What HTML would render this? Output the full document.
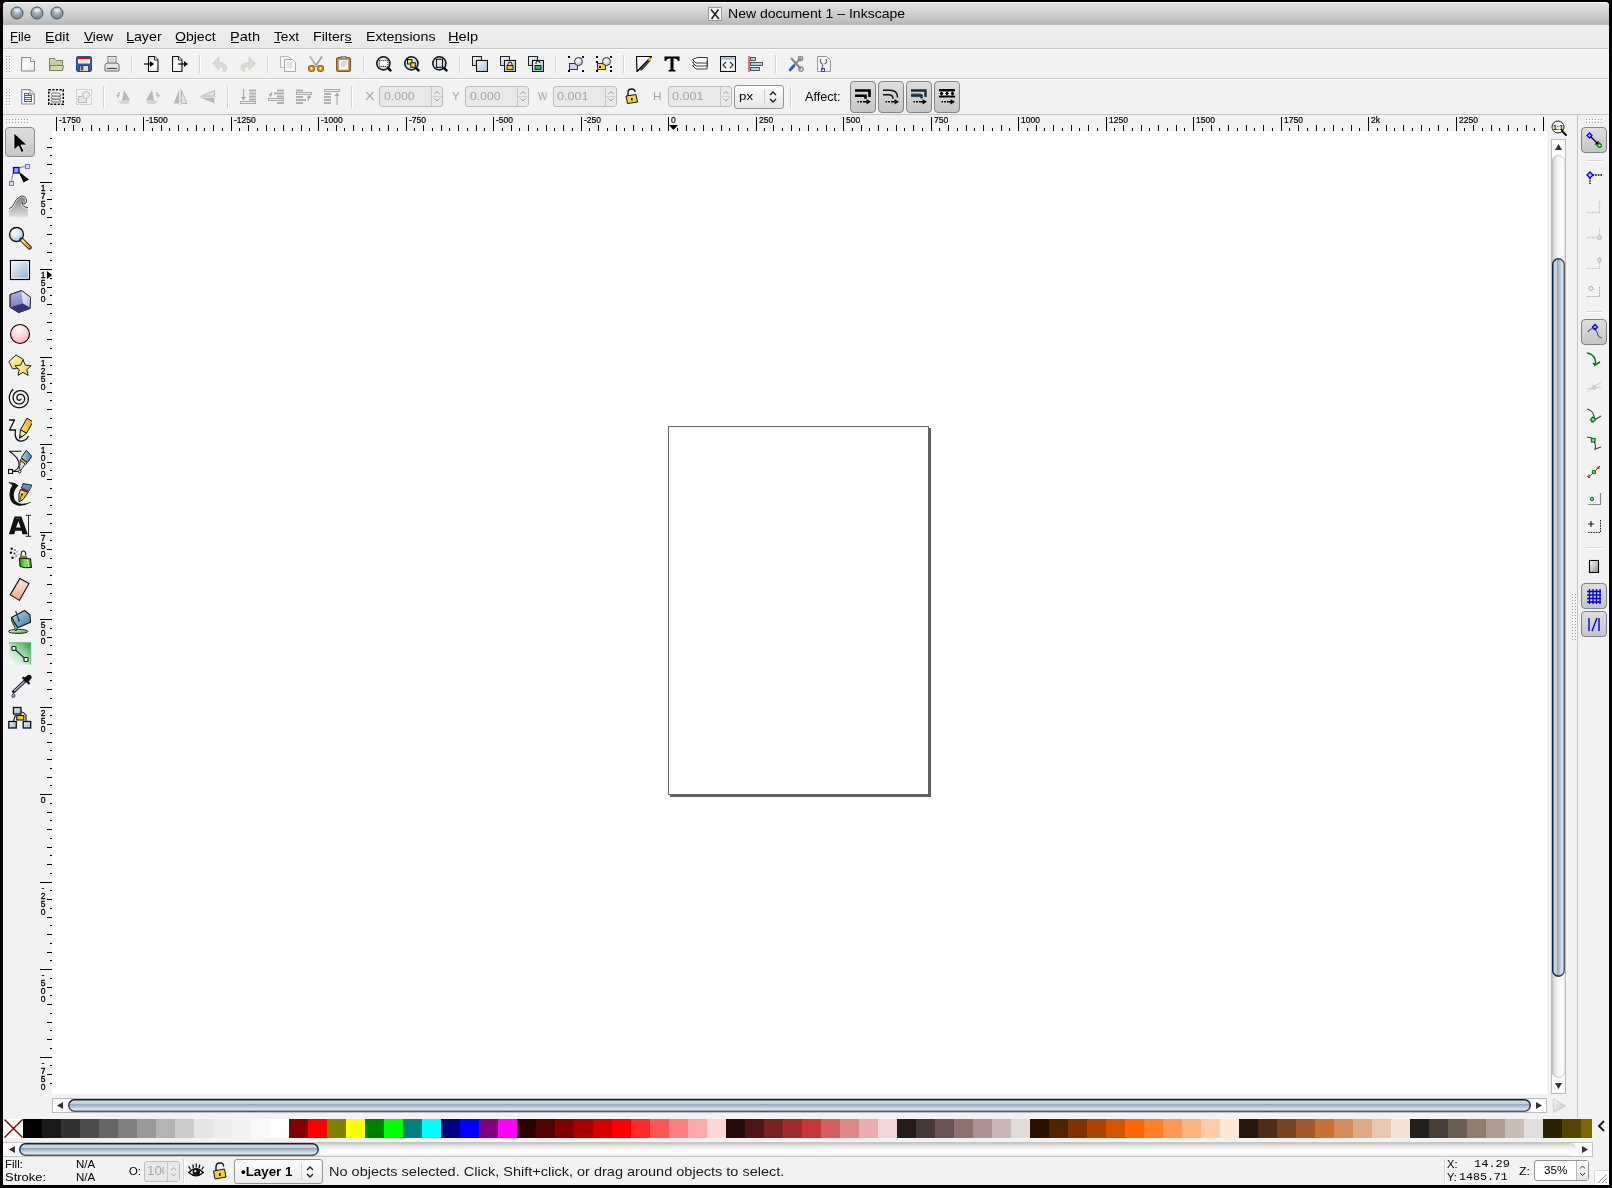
<!DOCTYPE html><html><head><meta charset="utf-8"><style>
*{margin:0;padding:0;box-sizing:border-box}
html,body{width:1612px;height:1188px;overflow:hidden;background:#000}
body{position:relative;font-family:"Liberation Sans",sans-serif;color:#000}
div,svg{position:absolute}
.t{white-space:nowrap;line-height:1;will-change:transform}
</style></head><body><div style="left:3px;top:2px;width:1606px;height:1183px;background:#f2f2f2;border-radius:4px 4px 0 0;"></div>
<div style="left:3px;top:2px;width:1606px;height:23px;background:linear-gradient(#e2e2e2,#cbcbcb 60%,#b6b6b6);border-top:1px solid #fff;border-radius:4px 4px 0 0;"></div>
<svg style="left:10px;top:6px" width="14" height="14"><defs><radialGradient id="tb17" cx="50%" cy="30%" r="70%"><stop offset="0" stop-color="#d4dde3"/><stop offset="0.5" stop-color="#98a8b3"/><stop offset="1" stop-color="#6e7d88"/></radialGradient></defs><circle cx="7" cy="7" r="6" fill="url(#tb17)" stroke="#4a555e" stroke-width="1"/><ellipse cx="7" cy="4.2" rx="3" ry="1.6" fill="#fff" opacity="0.5"/></svg>
<svg style="left:30px;top:6px" width="14" height="14"><defs><radialGradient id="tb37" cx="50%" cy="30%" r="70%"><stop offset="0" stop-color="#d4dde3"/><stop offset="0.5" stop-color="#98a8b3"/><stop offset="1" stop-color="#6e7d88"/></radialGradient></defs><circle cx="7" cy="7" r="6" fill="url(#tb37)" stroke="#4a555e" stroke-width="1"/><ellipse cx="7" cy="4.2" rx="3" ry="1.6" fill="#fff" opacity="0.5"/></svg>
<svg style="left:50px;top:6px" width="14" height="14"><defs><radialGradient id="tb57" cx="50%" cy="30%" r="70%"><stop offset="0" stop-color="#d4dde3"/><stop offset="0.5" stop-color="#98a8b3"/><stop offset="1" stop-color="#6e7d88"/></radialGradient></defs><circle cx="7" cy="7" r="6" fill="url(#tb57)" stroke="#4a555e" stroke-width="1"/><ellipse cx="7" cy="4.2" rx="3" ry="1.6" fill="#fff" opacity="0.5"/></svg>
<svg style="left:708px;top:7px" width="14" height="14"><rect x="0.5" y="0.5" width="13" height="13" fill="#f4f4f4" stroke="#9a9a9a"/><path d="M3 2.5L11 12M10.5 2.5L3.5 12" stroke="#222" stroke-width="1.6"/></svg>
<div style="left:3px;top:25px;width:1606px;height:23px;background:linear-gradient(#efefef,#e8e8e8);"></div>
<div style="left:3px;top:48px;width:1606px;height:1px;background:#c4c4c4;"></div>
<div style="left:3px;top:49px;width:1606px;height:1px;background:#fff;"></div>
<div style="left:3px;top:78px;width:1606px;height:1px;background:#c8c8c8;"></div>
<div style="left:3px;top:79px;width:1606px;height:1px;background:#fff;"></div>
<div style="left:3px;top:114px;width:1606px;height:1px;background:#c4c4c4;"></div>
<div style="left:52px;top:131px;width:1495px;height:963px;background:#fff;"></div>
<div style="left:668px;top:426px;width:261px;height:369px;border:1px solid #666;"></div>
<div style="left:929px;top:428px;width:2px;height:369px;background:#606060;"></div>
<div style="left:670px;top:795px;width:261px;height:2px;background:#606060;"></div>
<div style="left:1577px;top:115px;width:1px;height:1003px;background:#c4c4c4;"></div>
<svg style="left:6px;top:56px" width="6" height="18" shape-rendering="crispEdges"><rect x="0" y="0" width="1" height="1" fill="#9a9a9a"/><rect x="1" y="1" width="1" height="1" fill="#fff"/><rect x="3" y="0" width="1" height="1" fill="#9a9a9a"/><rect x="4" y="1" width="1" height="1" fill="#fff"/><rect x="0" y="3" width="1" height="1" fill="#9a9a9a"/><rect x="1" y="4" width="1" height="1" fill="#fff"/><rect x="3" y="3" width="1" height="1" fill="#9a9a9a"/><rect x="4" y="4" width="1" height="1" fill="#fff"/><rect x="0" y="6" width="1" height="1" fill="#9a9a9a"/><rect x="1" y="7" width="1" height="1" fill="#fff"/><rect x="3" y="6" width="1" height="1" fill="#9a9a9a"/><rect x="4" y="7" width="1" height="1" fill="#fff"/><rect x="0" y="9" width="1" height="1" fill="#9a9a9a"/><rect x="1" y="10" width="1" height="1" fill="#fff"/><rect x="3" y="9" width="1" height="1" fill="#9a9a9a"/><rect x="4" y="10" width="1" height="1" fill="#fff"/><rect x="0" y="12" width="1" height="1" fill="#9a9a9a"/><rect x="1" y="13" width="1" height="1" fill="#fff"/><rect x="3" y="12" width="1" height="1" fill="#9a9a9a"/><rect x="4" y="13" width="1" height="1" fill="#fff"/><rect x="0" y="15" width="1" height="1" fill="#9a9a9a"/><rect x="1" y="16" width="1" height="1" fill="#fff"/><rect x="3" y="15" width="1" height="1" fill="#9a9a9a"/><rect x="4" y="16" width="1" height="1" fill="#fff"/></svg>
<div style="left:131px;top:55px;width:1px;height:18px;background:#d4d4d4;"></div>
<div style="left:132px;top:55px;width:1px;height:18px;background:#fff;"></div>
<div style="left:199px;top:55px;width:1px;height:18px;background:#d4d4d4;"></div>
<div style="left:200px;top:55px;width:1px;height:18px;background:#fff;"></div>
<div style="left:267px;top:55px;width:1px;height:18px;background:#d4d4d4;"></div>
<div style="left:268px;top:55px;width:1px;height:18px;background:#fff;"></div>
<div style="left:363px;top:55px;width:1px;height:18px;background:#d4d4d4;"></div>
<div style="left:364px;top:55px;width:1px;height:18px;background:#fff;"></div>
<div style="left:459px;top:55px;width:1px;height:18px;background:#d4d4d4;"></div>
<div style="left:460px;top:55px;width:1px;height:18px;background:#fff;"></div>
<div style="left:555px;top:55px;width:1px;height:18px;background:#d4d4d4;"></div>
<div style="left:556px;top:55px;width:1px;height:18px;background:#fff;"></div>
<div style="left:623px;top:55px;width:1px;height:18px;background:#d4d4d4;"></div>
<div style="left:624px;top:55px;width:1px;height:18px;background:#fff;"></div>
<div style="left:775px;top:55px;width:1px;height:18px;background:#d4d4d4;"></div>
<div style="left:776px;top:55px;width:1px;height:18px;background:#fff;"></div>
<svg style="left:6px;top:89px" width="6" height="18" shape-rendering="crispEdges"><rect x="0" y="0" width="1" height="1" fill="#9a9a9a"/><rect x="1" y="1" width="1" height="1" fill="#fff"/><rect x="3" y="0" width="1" height="1" fill="#9a9a9a"/><rect x="4" y="1" width="1" height="1" fill="#fff"/><rect x="0" y="3" width="1" height="1" fill="#9a9a9a"/><rect x="1" y="4" width="1" height="1" fill="#fff"/><rect x="3" y="3" width="1" height="1" fill="#9a9a9a"/><rect x="4" y="4" width="1" height="1" fill="#fff"/><rect x="0" y="6" width="1" height="1" fill="#9a9a9a"/><rect x="1" y="7" width="1" height="1" fill="#fff"/><rect x="3" y="6" width="1" height="1" fill="#9a9a9a"/><rect x="4" y="7" width="1" height="1" fill="#fff"/><rect x="0" y="9" width="1" height="1" fill="#9a9a9a"/><rect x="1" y="10" width="1" height="1" fill="#fff"/><rect x="3" y="9" width="1" height="1" fill="#9a9a9a"/><rect x="4" y="10" width="1" height="1" fill="#fff"/><rect x="0" y="12" width="1" height="1" fill="#9a9a9a"/><rect x="1" y="13" width="1" height="1" fill="#fff"/><rect x="3" y="12" width="1" height="1" fill="#9a9a9a"/><rect x="4" y="13" width="1" height="1" fill="#fff"/><rect x="0" y="15" width="1" height="1" fill="#9a9a9a"/><rect x="1" y="16" width="1" height="1" fill="#fff"/><rect x="3" y="15" width="1" height="1" fill="#9a9a9a"/><rect x="4" y="16" width="1" height="1" fill="#fff"/></svg>
<div style="left:103px;top:86px;width:1px;height:22px;background:#d4d4d4;"></div>
<div style="left:104px;top:86px;width:1px;height:22px;background:#fff;"></div>
<div style="left:227px;top:86px;width:1px;height:22px;background:#d4d4d4;"></div>
<div style="left:228px;top:86px;width:1px;height:22px;background:#fff;"></div>
<div style="left:351px;top:86px;width:1px;height:22px;background:#d4d4d4;"></div>
<div style="left:352px;top:86px;width:1px;height:22px;background:#fff;"></div>
<div style="left:790px;top:86px;width:1px;height:22px;background:#d4d4d4;"></div>
<div style="left:791px;top:86px;width:1px;height:22px;background:#fff;"></div>
<div style="left:379px;top:86px;width:64px;height:21px;background:#e9e9e9;border:1px solid #bcbcbc;border-radius:3px;"></div>
<div style="left:431px;top:87px;width:1px;height:19px;background:#c6c6c6;"></div>
<div style="left:432px;top:96px;width:10px;height:1px;background:#d4d4d4;"></div>
<svg style="left:432px;top:87px" width="10" height="19"><path d="M2.5 7.0l2.5-2.5 2.5 2.5" fill="none" stroke="#a0a0a0" stroke-width="1"/><path d="M2.5 11.5l2.5 2.5 2.5-2.5" fill="none" stroke="#a0a0a0" stroke-width="1"/></svg>
<div style="left:465px;top:86px;width:64px;height:21px;background:#e9e9e9;border:1px solid #bcbcbc;border-radius:3px;"></div>
<div style="left:517px;top:87px;width:1px;height:19px;background:#c6c6c6;"></div>
<div style="left:518px;top:96px;width:10px;height:1px;background:#d4d4d4;"></div>
<svg style="left:518px;top:87px" width="10" height="19"><path d="M2.5 7.0l2.5-2.5 2.5 2.5" fill="none" stroke="#a0a0a0" stroke-width="1"/><path d="M2.5 11.5l2.5 2.5 2.5-2.5" fill="none" stroke="#a0a0a0" stroke-width="1"/></svg>
<div style="left:553px;top:86px;width:64px;height:21px;background:#e9e9e9;border:1px solid #bcbcbc;border-radius:3px;"></div>
<div style="left:605px;top:87px;width:1px;height:19px;background:#c6c6c6;"></div>
<div style="left:606px;top:96px;width:10px;height:1px;background:#d4d4d4;"></div>
<svg style="left:606px;top:87px" width="10" height="19"><path d="M2.5 7.0l2.5-2.5 2.5 2.5" fill="none" stroke="#a0a0a0" stroke-width="1"/><path d="M2.5 11.5l2.5 2.5 2.5-2.5" fill="none" stroke="#a0a0a0" stroke-width="1"/></svg>
<div style="left:668px;top:86px;width:64px;height:21px;background:#e9e9e9;border:1px solid #bcbcbc;border-radius:3px;"></div>
<div style="left:720px;top:87px;width:1px;height:19px;background:#c6c6c6;"></div>
<div style="left:721px;top:96px;width:10px;height:1px;background:#d4d4d4;"></div>
<svg style="left:721px;top:87px" width="10" height="19"><path d="M2.5 7.0l2.5-2.5 2.5 2.5" fill="none" stroke="#a0a0a0" stroke-width="1"/><path d="M2.5 11.5l2.5 2.5 2.5-2.5" fill="none" stroke="#a0a0a0" stroke-width="1"/></svg>
<div style="left:734px;top:85px;width:50px;height:24px;background:linear-gradient(#fdfdfd,#e6e6e6);border:1px solid #8f959a;border-radius:3px;"></div>
<div style="left:764px;top:89px;width:1px;height:16px;background:#cfcfcf;"></div>
<svg style="left:767px;top:88px" width="12" height="18"><path d="M3 7l3-3 3 3M3 11l3 3 3-3" fill="none" stroke="#222" stroke-width="1.4"/></svg>
<div style="left:850px;top:81px;width:26px;height:32px;background:linear-gradient(#dedede,#c6c6c6);border:1px solid #7e868c;border-radius:4px;"></div>
<div style="left:878px;top:81px;width:26px;height:32px;background:linear-gradient(#dedede,#c6c6c6);border:1px solid #7e868c;border-radius:4px;"></div>
<div style="left:906px;top:81px;width:26px;height:32px;background:linear-gradient(#dedede,#c6c6c6);border:1px solid #7e868c;border-radius:4px;"></div>
<div style="left:934px;top:81px;width:26px;height:32px;background:linear-gradient(#dedede,#c6c6c6);border:1px solid #7e868c;border-radius:4px;"></div>
<svg style="left:52px;top:115px;will-change:transform" width="1495" height="16" shape-rendering="crispEdges"><rect x="4" y="2" width="1" height="14"/><rect x="12" y="13" width="1" height="3"/><rect x="21" y="10" width="1" height="6"/><rect x="30" y="13" width="1" height="3"/><rect x="39" y="10" width="1" height="6"/><rect x="47" y="13" width="1" height="3"/><rect x="56" y="10" width="1" height="6"/><rect x="65" y="13" width="1" height="3"/><rect x="74" y="10" width="1" height="6"/><rect x="82" y="13" width="1" height="3"/><rect x="91" y="2" width="1" height="14"/><rect x="100" y="13" width="1" height="3"/><rect x="109" y="10" width="1" height="6"/><rect x="117" y="13" width="1" height="3"/><rect x="126" y="10" width="1" height="6"/><rect x="135" y="13" width="1" height="3"/><rect x="144" y="10" width="1" height="6"/><rect x="152" y="13" width="1" height="3"/><rect x="161" y="10" width="1" height="6"/><rect x="170" y="13" width="1" height="3"/><rect x="179" y="2" width="1" height="14"/><rect x="187" y="13" width="1" height="3"/><rect x="196" y="10" width="1" height="6"/><rect x="205" y="13" width="1" height="3"/><rect x="214" y="10" width="1" height="6"/><rect x="222" y="13" width="1" height="3"/><rect x="231" y="10" width="1" height="6"/><rect x="240" y="13" width="1" height="3"/><rect x="249" y="10" width="1" height="6"/><rect x="257" y="13" width="1" height="3"/><rect x="266" y="2" width="1" height="14"/><rect x="275" y="13" width="1" height="3"/><rect x="284" y="10" width="1" height="6"/><rect x="292" y="13" width="1" height="3"/><rect x="301" y="10" width="1" height="6"/><rect x="310" y="13" width="1" height="3"/><rect x="319" y="10" width="1" height="6"/><rect x="327" y="13" width="1" height="3"/><rect x="336" y="10" width="1" height="6"/><rect x="345" y="13" width="1" height="3"/><rect x="354" y="2" width="1" height="14"/><rect x="362" y="13" width="1" height="3"/><rect x="371" y="10" width="1" height="6"/><rect x="380" y="13" width="1" height="3"/><rect x="389" y="10" width="1" height="6"/><rect x="397" y="13" width="1" height="3"/><rect x="406" y="10" width="1" height="6"/><rect x="415" y="13" width="1" height="3"/><rect x="424" y="10" width="1" height="6"/><rect x="432" y="13" width="1" height="3"/><rect x="441" y="2" width="1" height="14"/><rect x="450" y="13" width="1" height="3"/><rect x="459" y="10" width="1" height="6"/><rect x="467" y="13" width="1" height="3"/><rect x="476" y="10" width="1" height="6"/><rect x="485" y="13" width="1" height="3"/><rect x="494" y="10" width="1" height="6"/><rect x="502" y="13" width="1" height="3"/><rect x="511" y="10" width="1" height="6"/><rect x="520" y="13" width="1" height="3"/><rect x="529" y="2" width="1" height="14"/><rect x="537" y="13" width="1" height="3"/><rect x="546" y="10" width="1" height="6"/><rect x="555" y="13" width="1" height="3"/><rect x="564" y="10" width="1" height="6"/><rect x="572" y="13" width="1" height="3"/><rect x="581" y="10" width="1" height="6"/><rect x="590" y="13" width="1" height="3"/><rect x="599" y="10" width="1" height="6"/><rect x="607" y="13" width="1" height="3"/><rect x="616" y="2" width="1" height="14"/><rect x="625" y="13" width="1" height="3"/><rect x="634" y="10" width="1" height="6"/><rect x="642" y="13" width="1" height="3"/><rect x="651" y="10" width="1" height="6"/><rect x="660" y="13" width="1" height="3"/><rect x="669" y="10" width="1" height="6"/><rect x="677" y="13" width="1" height="3"/><rect x="686" y="10" width="1" height="6"/><rect x="695" y="13" width="1" height="3"/><rect x="704" y="2" width="1" height="14"/><rect x="712" y="13" width="1" height="3"/><rect x="721" y="10" width="1" height="6"/><rect x="730" y="13" width="1" height="3"/><rect x="739" y="10" width="1" height="6"/><rect x="747" y="13" width="1" height="3"/><rect x="756" y="10" width="1" height="6"/><rect x="765" y="13" width="1" height="3"/><rect x="774" y="10" width="1" height="6"/><rect x="782" y="13" width="1" height="3"/><rect x="791" y="2" width="1" height="14"/><rect x="800" y="13" width="1" height="3"/><rect x="809" y="10" width="1" height="6"/><rect x="817" y="13" width="1" height="3"/><rect x="826" y="10" width="1" height="6"/><rect x="835" y="13" width="1" height="3"/><rect x="844" y="10" width="1" height="6"/><rect x="852" y="13" width="1" height="3"/><rect x="861" y="10" width="1" height="6"/><rect x="870" y="13" width="1" height="3"/><rect x="879" y="2" width="1" height="14"/><rect x="887" y="13" width="1" height="3"/><rect x="896" y="10" width="1" height="6"/><rect x="905" y="13" width="1" height="3"/><rect x="914" y="10" width="1" height="6"/><rect x="922" y="13" width="1" height="3"/><rect x="931" y="10" width="1" height="6"/><rect x="940" y="13" width="1" height="3"/><rect x="949" y="10" width="1" height="6"/><rect x="957" y="13" width="1" height="3"/><rect x="966" y="2" width="1" height="14"/><rect x="975" y="13" width="1" height="3"/><rect x="984" y="10" width="1" height="6"/><rect x="992" y="13" width="1" height="3"/><rect x="1001" y="10" width="1" height="6"/><rect x="1010" y="13" width="1" height="3"/><rect x="1019" y="10" width="1" height="6"/><rect x="1027" y="13" width="1" height="3"/><rect x="1036" y="10" width="1" height="6"/><rect x="1045" y="13" width="1" height="3"/><rect x="1054" y="2" width="1" height="14"/><rect x="1062" y="13" width="1" height="3"/><rect x="1071" y="10" width="1" height="6"/><rect x="1080" y="13" width="1" height="3"/><rect x="1089" y="10" width="1" height="6"/><rect x="1097" y="13" width="1" height="3"/><rect x="1106" y="10" width="1" height="6"/><rect x="1115" y="13" width="1" height="3"/><rect x="1124" y="10" width="1" height="6"/><rect x="1132" y="13" width="1" height="3"/><rect x="1141" y="2" width="1" height="14"/><rect x="1150" y="13" width="1" height="3"/><rect x="1159" y="10" width="1" height="6"/><rect x="1167" y="13" width="1" height="3"/><rect x="1176" y="10" width="1" height="6"/><rect x="1185" y="13" width="1" height="3"/><rect x="1194" y="10" width="1" height="6"/><rect x="1202" y="13" width="1" height="3"/><rect x="1211" y="10" width="1" height="6"/><rect x="1220" y="13" width="1" height="3"/><rect x="1229" y="2" width="1" height="14"/><rect x="1237" y="13" width="1" height="3"/><rect x="1246" y="10" width="1" height="6"/><rect x="1255" y="13" width="1" height="3"/><rect x="1264" y="10" width="1" height="6"/><rect x="1272" y="13" width="1" height="3"/><rect x="1281" y="10" width="1" height="6"/><rect x="1290" y="13" width="1" height="3"/><rect x="1299" y="10" width="1" height="6"/><rect x="1307" y="13" width="1" height="3"/><rect x="1316" y="2" width="1" height="14"/><rect x="1325" y="13" width="1" height="3"/><rect x="1334" y="10" width="1" height="6"/><rect x="1342" y="13" width="1" height="3"/><rect x="1351" y="10" width="1" height="6"/><rect x="1360" y="13" width="1" height="3"/><rect x="1369" y="10" width="1" height="6"/><rect x="1377" y="13" width="1" height="3"/><rect x="1386" y="10" width="1" height="6"/><rect x="1395" y="13" width="1" height="3"/><rect x="1404" y="2" width="1" height="14"/><rect x="1412" y="13" width="1" height="3"/><rect x="1421" y="10" width="1" height="6"/><rect x="1430" y="13" width="1" height="3"/><rect x="1439" y="10" width="1" height="6"/><rect x="1447" y="13" width="1" height="3"/><rect x="1456" y="10" width="1" height="6"/><rect x="1465" y="13" width="1" height="3"/><rect x="1474" y="10" width="1" height="6"/><rect x="1482" y="13" width="1" height="3"/><rect x="1491" y="2" width="1" height="14"/><g font-family="Liberation Sans" font-size="8.5" stroke="#000" stroke-width="0.2" shape-rendering="auto"><text x="7" y="8">-1750</text><text x="94" y="8">-1500</text><text x="182" y="8">-1250</text><text x="269" y="8">-1000</text><text x="357" y="8">-750</text><text x="444" y="8">-500</text><text x="532" y="8">-250</text><text x="619" y="8">0</text><text x="707" y="8">250</text><text x="794" y="8">500</text><text x="882" y="8">750</text><text x="969" y="8">1000</text><text x="1057" y="8">1250</text><text x="1144" y="8">1500</text><text x="1232" y="8">1750</text><text x="1319" y="8">2k</text><text x="1407" y="8">2250</text></g><path d="M617 10h9l-4.5 5z" shape-rendering="auto"/></svg>
<svg style="left:38px;top:131px;will-change:transform" width="14" height="963" shape-rendering="crispEdges"><rect x="12" y="952" width="2" height="1"/><rect x="9" y="943" width="5" height="1"/><rect x="12" y="934" width="2" height="1"/><rect x="2" y="926" width="12" height="1"/><rect x="12" y="917" width="2" height="1"/><rect x="9" y="908" width="5" height="1"/><rect x="12" y="899" width="2" height="1"/><rect x="9" y="891" width="5" height="1"/><rect x="12" y="882" width="2" height="1"/><rect x="9" y="873" width="5" height="1"/><rect x="12" y="864" width="2" height="1"/><rect x="9" y="856" width="5" height="1"/><rect x="12" y="847" width="2" height="1"/><rect x="2" y="838" width="12" height="1"/><rect x="12" y="829" width="2" height="1"/><rect x="9" y="821" width="5" height="1"/><rect x="12" y="812" width="2" height="1"/><rect x="9" y="803" width="5" height="1"/><rect x="12" y="794" width="2" height="1"/><rect x="9" y="786" width="5" height="1"/><rect x="12" y="777" width="2" height="1"/><rect x="9" y="768" width="5" height="1"/><rect x="12" y="759" width="2" height="1"/><rect x="2" y="751" width="12" height="1"/><rect x="12" y="742" width="2" height="1"/><rect x="9" y="733" width="5" height="1"/><rect x="12" y="724" width="2" height="1"/><rect x="9" y="716" width="5" height="1"/><rect x="12" y="707" width="2" height="1"/><rect x="9" y="698" width="5" height="1"/><rect x="12" y="689" width="2" height="1"/><rect x="9" y="681" width="5" height="1"/><rect x="12" y="672" width="2" height="1"/><rect x="2" y="663" width="12" height="1"/><rect x="12" y="654" width="2" height="1"/><rect x="9" y="646" width="5" height="1"/><rect x="12" y="637" width="2" height="1"/><rect x="9" y="628" width="5" height="1"/><rect x="12" y="619" width="2" height="1"/><rect x="9" y="611" width="5" height="1"/><rect x="12" y="602" width="2" height="1"/><rect x="9" y="593" width="5" height="1"/><rect x="12" y="584" width="2" height="1"/><rect x="2" y="576" width="12" height="1"/><rect x="12" y="567" width="2" height="1"/><rect x="9" y="558" width="5" height="1"/><rect x="12" y="549" width="2" height="1"/><rect x="9" y="541" width="5" height="1"/><rect x="12" y="532" width="2" height="1"/><rect x="9" y="523" width="5" height="1"/><rect x="12" y="514" width="2" height="1"/><rect x="9" y="506" width="5" height="1"/><rect x="12" y="497" width="2" height="1"/><rect x="2" y="488" width="12" height="1"/><rect x="12" y="479" width="2" height="1"/><rect x="9" y="471" width="5" height="1"/><rect x="12" y="462" width="2" height="1"/><rect x="9" y="453" width="5" height="1"/><rect x="12" y="444" width="2" height="1"/><rect x="9" y="436" width="5" height="1"/><rect x="12" y="427" width="2" height="1"/><rect x="9" y="418" width="5" height="1"/><rect x="12" y="409" width="2" height="1"/><rect x="2" y="401" width="12" height="1"/><rect x="12" y="392" width="2" height="1"/><rect x="9" y="383" width="5" height="1"/><rect x="12" y="374" width="2" height="1"/><rect x="9" y="366" width="5" height="1"/><rect x="12" y="357" width="2" height="1"/><rect x="9" y="348" width="5" height="1"/><rect x="12" y="339" width="2" height="1"/><rect x="9" y="331" width="5" height="1"/><rect x="12" y="322" width="2" height="1"/><rect x="2" y="313" width="12" height="1"/><rect x="12" y="304" width="2" height="1"/><rect x="9" y="296" width="5" height="1"/><rect x="12" y="287" width="2" height="1"/><rect x="9" y="278" width="5" height="1"/><rect x="12" y="269" width="2" height="1"/><rect x="9" y="261" width="5" height="1"/><rect x="12" y="252" width="2" height="1"/><rect x="9" y="243" width="5" height="1"/><rect x="12" y="234" width="2" height="1"/><rect x="2" y="226" width="12" height="1"/><rect x="12" y="217" width="2" height="1"/><rect x="9" y="208" width="5" height="1"/><rect x="12" y="199" width="2" height="1"/><rect x="9" y="191" width="5" height="1"/><rect x="12" y="182" width="2" height="1"/><rect x="9" y="173" width="5" height="1"/><rect x="12" y="164" width="2" height="1"/><rect x="9" y="156" width="5" height="1"/><rect x="12" y="147" width="2" height="1"/><rect x="2" y="138" width="12" height="1"/><rect x="12" y="129" width="2" height="1"/><rect x="9" y="121" width="5" height="1"/><rect x="12" y="112" width="2" height="1"/><rect x="9" y="103" width="5" height="1"/><rect x="12" y="94" width="2" height="1"/><rect x="9" y="86" width="5" height="1"/><rect x="12" y="77" width="2" height="1"/><rect x="9" y="68" width="5" height="1"/><rect x="12" y="59" width="2" height="1"/><rect x="2" y="51" width="12" height="1"/><rect x="12" y="42" width="2" height="1"/><rect x="9" y="33" width="5" height="1"/><rect x="12" y="24" width="2" height="1"/><rect x="9" y="16" width="5" height="1"/><rect x="12" y="7" width="2" height="1"/><g font-family="Liberation Sans" font-size="8.5" stroke="#000" stroke-width="0.3" text-anchor="middle" shape-rendering="auto"><text x="5" y="1022">-</text><text x="5" y="1030">1</text><text x="5" y="1038">0</text><text x="5" y="1046">0</text><text x="5" y="1054">0</text><text x="5" y="935">-</text><text x="5" y="943">7</text><text x="5" y="951">5</text><text x="5" y="959">0</text><text x="5" y="847">-</text><text x="5" y="855">5</text><text x="5" y="863">0</text><text x="5" y="871">0</text><text x="5" y="760">-</text><text x="5" y="768">2</text><text x="5" y="776">5</text><text x="5" y="784">0</text><text x="5" y="672">0</text><text x="5" y="585">2</text><text x="5" y="593">5</text><text x="5" y="601">0</text><text x="5" y="497">5</text><text x="5" y="505">0</text><text x="5" y="513">0</text><text x="5" y="410">7</text><text x="5" y="418">5</text><text x="5" y="426">0</text><text x="5" y="322">1</text><text x="5" y="330">0</text><text x="5" y="338">0</text><text x="5" y="346">0</text><text x="5" y="235">1</text><text x="5" y="243">2</text><text x="5" y="251">5</text><text x="5" y="259">0</text><text x="5" y="147">1</text><text x="5" y="155">5</text><text x="5" y="163">0</text><text x="5" y="171">0</text><text x="5" y="60">1</text><text x="5" y="68">7</text><text x="5" y="76">5</text><text x="5" y="84">0</text></g><path d="M9 140v8l5-4z" shape-rendering="auto"/></svg>
<div style="left:1551px;top:139px;width:15px;height:955px;background:#fdfdfd;border:1px solid #bcbcbc;"></div>
<div style="left:1552px;top:155px;width:13px;height:923px;background:linear-gradient(90deg,#c4c4c4,#e6e6e6 22%,#f8f8f8 50%,#fcfcfc 80%,#ececec);border-radius:6.5px;box-shadow:inset 0 1px 1px rgba(0,0,0,0.18),inset 0 -1px 1px rgba(0,0,0,0.18);"></div>
<svg style="left:1552px;top:140px" width="13" height="16"><path d="M3 10h7l-3.5-6z" fill="#333"/></svg>
<svg style="left:1552px;top:1077px" width="13" height="16"><path d="M3 6h7l-3.5 6z" fill="#333"/></svg>
<svg style="left:1552px;top:258px" width="13" height="719"><defs><linearGradient id="tvf" x1="0" y1="0" x2="1" y2="0"><stop offset="0" stop-color="#d2d8de"/><stop offset="0.36" stop-color="#c6ced6"/><stop offset="0.4" stop-color="#95a5b8"/><stop offset="0.7" stop-color="#c4d3e4"/><stop offset="1" stop-color="#eef7ff"/></linearGradient><linearGradient id="tvs" x1="0" y1="0" x2="1" y2="0"><stop offset="0" stop-color="#0a2448"/><stop offset="0.5" stop-color="#1e3450"/><stop offset="1" stop-color="#5a5a5a"/></linearGradient></defs><rect x="0.75" y="0.75" width="11.5" height="717.5" rx="5.75" fill="url(#tvf)" stroke="url(#tvs)" stroke-width="1.5"/></svg>
<div style="left:52px;top:1098px;width:1495px;height:15px;background:#fdfdfd;border:1px solid #bcbcbc;"></div>
<div style="left:67px;top:1099px;width:1465px;height:13px;background:linear-gradient(180deg,#c4c4c4,#e6e6e6 22%,#f8f8f8 50%,#fcfcfc 80%,#ececec);border-radius:6.5px;"></div>
<svg style="left:53px;top:1099px" width="15" height="13"><path d="M10 3v7l-6-3.5z" fill="#333"/></svg>
<svg style="left:1531px;top:1099px" width="15" height="13"><path d="M5 3v7l6-3.5z" fill="#333"/></svg>
<svg style="left:68px;top:1099px" width="1463" height="13"><defs><linearGradient id="thf" x1="0" y1="0" x2="0" y2="1"><stop offset="0" stop-color="#d2d8de"/><stop offset="0.36" stop-color="#c6ced6"/><stop offset="0.4" stop-color="#95a5b8"/><stop offset="0.7" stop-color="#c4d3e4"/><stop offset="1" stop-color="#eef7ff"/></linearGradient><linearGradient id="ths" x1="0" y1="0" x2="0" y2="1"><stop offset="0" stop-color="#0a2448"/><stop offset="0.5" stop-color="#1e3450"/><stop offset="1" stop-color="#5a5a5a"/></linearGradient></defs><rect x="0.75" y="0.75" width="1461.5" height="11.5" rx="5.75" fill="url(#thf)" stroke="url(#ths)" stroke-width="1.5"/></svg>
<svg style="left:1551px;top:1097px" width="16" height="17"><defs><linearGradient id="gzs" x1="0" y1="0" x2="1" y2="1"><stop offset="0" stop-color="#f4f4f0"/><stop offset="1" stop-color="#c8c8c4"/></linearGradient></defs><path d="M2.5 1.5Q1 8 3 15.5L14.5 9z" fill="url(#gzs)" stroke="#d0d0d0"/></svg>
<svg style="left:4px;top:1119px" width="1588" height="19" shape-rendering="crispEdges"><rect x="0" y="0" width="19" height="19" fill="#fff"/><path d="M0.5 0.5L18.5 18.5M18.5 0.5L0.5 18.5" stroke="#820000" stroke-width="1.4" shape-rendering="auto"/><rect x="19" y="0" width="19" height="19" fill="#000000"/><rect x="38" y="0" width="19" height="19" fill="#1a1a1a"/><rect x="57" y="0" width="19" height="19" fill="#333333"/><rect x="76" y="0" width="19" height="19" fill="#4d4d4d"/><rect x="95" y="0" width="19" height="19" fill="#666666"/><rect x="114" y="0" width="19" height="19" fill="#808080"/><rect x="133" y="0" width="19" height="19" fill="#999999"/><rect x="152" y="0" width="19" height="19" fill="#b3b3b3"/><rect x="171" y="0" width="19" height="19" fill="#cccccc"/><rect x="190" y="0" width="19" height="19" fill="#e6e6e6"/><rect x="209" y="0" width="19" height="19" fill="#ececec"/><rect x="228" y="0" width="19" height="19" fill="#f2f2f2"/><rect x="247" y="0" width="19" height="19" fill="#f9f9f9"/><rect x="266" y="0" width="19" height="19" fill="#ffffff"/><rect x="285" y="0" width="19" height="19" fill="#800000"/><rect x="304" y="0" width="19" height="19" fill="#ff0000"/><rect x="323" y="0" width="19" height="19" fill="#808000"/><rect x="342" y="0" width="19" height="19" fill="#ffff00"/><rect x="361" y="0" width="19" height="19" fill="#008000"/><rect x="380" y="0" width="19" height="19" fill="#00ff00"/><rect x="399" y="0" width="19" height="19" fill="#008080"/><rect x="418" y="0" width="19" height="19" fill="#00ffff"/><rect x="437" y="0" width="19" height="19" fill="#000080"/><rect x="456" y="0" width="19" height="19" fill="#0000ff"/><rect x="475" y="0" width="19" height="19" fill="#800080"/><rect x="494" y="0" width="19" height="19" fill="#ff00ff"/><rect x="513" y="0" width="19" height="19" fill="#2b0000"/><rect x="532" y="0" width="19" height="19" fill="#550000"/><rect x="551" y="0" width="19" height="19" fill="#800000"/><rect x="570" y="0" width="19" height="19" fill="#aa0000"/><rect x="589" y="0" width="19" height="19" fill="#d40000"/><rect x="608" y="0" width="19" height="19" fill="#ff0000"/><rect x="627" y="0" width="19" height="19" fill="#ff2a2a"/><rect x="646" y="0" width="19" height="19" fill="#ff5555"/><rect x="665" y="0" width="19" height="19" fill="#ff8080"/><rect x="684" y="0" width="19" height="19" fill="#ffaaaa"/><rect x="703" y="0" width="19" height="19" fill="#ffd5d5"/><rect x="722" y="0" width="19" height="19" fill="#280b0b"/><rect x="741" y="0" width="19" height="19" fill="#501616"/><rect x="760" y="0" width="19" height="19" fill="#782121"/><rect x="779" y="0" width="19" height="19" fill="#a02c2c"/><rect x="798" y="0" width="19" height="19" fill="#c83737"/><rect x="817" y="0" width="19" height="19" fill="#d35f5f"/><rect x="836" y="0" width="19" height="19" fill="#de8787"/><rect x="855" y="0" width="19" height="19" fill="#e9afaf"/><rect x="874" y="0" width="19" height="19" fill="#f4d7d7"/><rect x="893" y="0" width="19" height="19" fill="#241c1c"/><rect x="912" y="0" width="19" height="19" fill="#483737"/><rect x="931" y="0" width="19" height="19" fill="#6c5353"/><rect x="950" y="0" width="19" height="19" fill="#916f6f"/><rect x="969" y="0" width="19" height="19" fill="#ac9393"/><rect x="988" y="0" width="19" height="19" fill="#c8b7b7"/><rect x="1007" y="0" width="19" height="19" fill="#e3dbdb"/><rect x="1026" y="0" width="19" height="19" fill="#2b1100"/><rect x="1045" y="0" width="19" height="19" fill="#552200"/><rect x="1064" y="0" width="19" height="19" fill="#803300"/><rect x="1083" y="0" width="19" height="19" fill="#aa4400"/><rect x="1102" y="0" width="19" height="19" fill="#d45500"/><rect x="1121" y="0" width="19" height="19" fill="#ff6600"/><rect x="1140" y="0" width="19" height="19" fill="#ff7f2a"/><rect x="1159" y="0" width="19" height="19" fill="#ff9955"/><rect x="1178" y="0" width="19" height="19" fill="#ffb380"/><rect x="1197" y="0" width="19" height="19" fill="#ffccaa"/><rect x="1216" y="0" width="19" height="19" fill="#ffe6d5"/><rect x="1235" y="0" width="19" height="19" fill="#28170b"/><rect x="1254" y="0" width="19" height="19" fill="#502d16"/><rect x="1273" y="0" width="19" height="19" fill="#784421"/><rect x="1292" y="0" width="19" height="19" fill="#a05a2c"/><rect x="1311" y="0" width="19" height="19" fill="#c87137"/><rect x="1330" y="0" width="19" height="19" fill="#d38d5f"/><rect x="1349" y="0" width="19" height="19" fill="#deaa87"/><rect x="1368" y="0" width="19" height="19" fill="#e9c6af"/><rect x="1387" y="0" width="19" height="19" fill="#f4e3d7"/><rect x="1406" y="0" width="19" height="19" fill="#241f1c"/><rect x="1425" y="0" width="19" height="19" fill="#483e37"/><rect x="1444" y="0" width="19" height="19" fill="#6c5d53"/><rect x="1463" y="0" width="19" height="19" fill="#917c6f"/><rect x="1482" y="0" width="19" height="19" fill="#ac9d93"/><rect x="1501" y="0" width="19" height="19" fill="#c8beb7"/><rect x="1520" y="0" width="19" height="19" fill="#e3dedb"/><rect x="1539" y="0" width="19" height="19" fill="#2b2200"/><rect x="1558" y="0" width="19" height="19" fill="#554400"/><rect x="1577" y="0" width="19" height="19" fill="#806600"/></svg>
<svg style="left:1594px;top:1118px" width="14" height="16"><path d="M10 3L5 8l5 5" fill="none" stroke="#111" stroke-width="1.8"/></svg>
<div style="left:3px;top:1142px;width:1590px;height:15px;background:#fdfdfd;border:1px solid #c4c4c4;border-left:0;"></div>
<div style="left:19px;top:1143px;width:1558px;height:13px;background:linear-gradient(180deg,#c4c4c4,#e6e6e6 22%,#f8f8f8 50%,#fcfcfc 80%,#ececec);border-radius:6.5px;"></div>
<svg style="left:5px;top:1143px" width="15" height="13"><path d="M10 3v7l-6-3.5z" fill="#333"/></svg>
<svg style="left:1577px;top:1143px" width="15" height="13"><path d="M5 3v7l6-3.5z" fill="#333"/></svg>
<svg style="left:19px;top:1143px" width="300" height="13"><defs><linearGradient id="tpf" x1="0" y1="0" x2="0" y2="1"><stop offset="0" stop-color="#d2d8de"/><stop offset="0.36" stop-color="#c6ced6"/><stop offset="0.4" stop-color="#95a5b8"/><stop offset="0.7" stop-color="#c4d3e4"/><stop offset="1" stop-color="#eef7ff"/></linearGradient><linearGradient id="tps" x1="0" y1="0" x2="0" y2="1"><stop offset="0" stop-color="#0a2448"/><stop offset="0.5" stop-color="#1e3450"/><stop offset="1" stop-color="#5a5a5a"/></linearGradient></defs><rect x="0.75" y="0.75" width="298.5" height="11.5" rx="5.75" fill="url(#tpf)" stroke="url(#tps)" stroke-width="1.5"/></svg>
<div style="left:144px;top:1161px;width:36px;height:21px;background:#e9e9e9;border:1px solid #bcbcbc;border-radius:3px;overflow:hidden;"></div>
<div style="left:167px;top:1162px;width:12px;height:19px;background:#e9e9e9;border-left:1px solid #c6c6c6;"></div>
<svg style="left:168px;top:1162px" width="11" height="19"><path d="M3 8l2.5-2.5L8 8M3 11.5l2.5 2.5 2.5-2.5" fill="none" stroke="#aaa"/></svg>
<div style="left:183px;top:1159px;width:1px;height:24px;background:#d4d4d4;"></div>
<div style="left:184px;top:1159px;width:1px;height:24px;background:#fff;"></div>
<div style="left:234px;top:1159px;width:89px;height:25px;background:linear-gradient(#fdfdfd,#ececec);border:1px solid #8f959a;border-radius:3px;"></div>
<div style="left:301px;top:1163px;width:1px;height:17px;background:#d0d0d0;"></div>
<svg style="left:304px;top:1163px" width="12" height="18"><path d="M3 7l3-3 3 3M3 11l3 3 3-3" fill="none" stroke="#222" stroke-width="1.4"/></svg>
<div style="left:1444px;top:1159px;width:1px;height:24px;background:#d4d4d4;"></div>
<div style="left:1445px;top:1159px;width:1px;height:24px;background:#fff;"></div>
<div style="left:1534px;top:1160px;width:55px;height:21px;background:#fff;border:1px solid #8f959a;border-radius:3px;"></div>
<div style="left:1576px;top:1161px;width:12px;height:19px;background:linear-gradient(#fff,#e4e4e4);border-left:1px solid #b8b8b8;"></div>
<svg style="left:1577px;top:1161px" width="11" height="19"><path d="M3 7.5l2.5-2.5L8 7.5M3 12l2.5 2.5 2.5-2.5" fill="none" stroke="#333"/></svg>
<svg style="left:1594px;top:1170px" width="15" height="15"><rect x="0.5" y="0.5" width="15" height="15" fill="#fff" stroke="#ddd"/><path d="M4 13L13 4M8 13L13 8M11.5 13l1.5-1.5" stroke="#555" stroke-width="1" stroke-dasharray="1 0.5"/></svg>
<svg width="0" height="0" style="left:0;top:0"><defs>
<linearGradient id="gdoc" x1="0" y1="0" x2="1" y2="1"><stop offset="0" stop-color="#e4e4e0"/><stop offset="0.5" stop-color="#fbfbfb"/><stop offset="1" stop-color="#e6e6e2"/></linearGradient>
<linearGradient id="gfold" x1="0" y1="0" x2="0" y2="1"><stop offset="0" stop-color="#d6dab2"/><stop offset="1" stop-color="#b2b88e"/></linearGradient>
<linearGradient id="gblue" x1="0" y1="0" x2="1" y2="1"><stop offset="0" stop-color="#f4f8fc"/><stop offset="1" stop-color="#a8c0d8"/></linearGradient>
<radialGradient id="glens" cx="0.4" cy="0.35" r="0.7"><stop offset="0" stop-color="#ffffff"/><stop offset="1" stop-color="#a9c4e2"/></radialGradient>
<linearGradient id="gbtn" x1="0" y1="0" x2="0" y2="1"><stop offset="0" stop-color="#e0e0e0"/><stop offset="1" stop-color="#c4c4c4"/></linearGradient>
</defs></svg>
<svg style="left:20px;top:56px" width="16" height="16" viewBox="0 0 16 16" ><path d="M1.5 1.5h9l4 4v9.5h-13z" fill="url(#gdoc)" stroke="#8a8a8a" stroke-linejoin="round"/><path d="M10.5 1.5v4h4" fill="#fff" stroke="#8a8a8a" stroke-linejoin="round"/></svg>
<svg style="left:48px;top:56px" width="16" height="16" viewBox="0 0 16 16" ><path d="M1.5 2.5h5l1.5 2h6.5v10h-13z" fill="url(#gfold)" stroke="#7b8163" stroke-linejoin="round"/><path d="M2.5 9.5h13l-1 5h-13z" fill="#d4d8b0" stroke="#7b8163" stroke-linejoin="round"/></svg>
<svg style="left:76px;top:56px" width="16" height="16" viewBox="0 0 16 16" ><rect x="0.5" y="0.5" width="15" height="15" rx="1.5" fill="#2f5fa8" stroke="#1f4f98"/><rect x="2" y="1" width="12" height="2" fill="#e00"/><rect x="2" y="3" width="12" height="4.5" fill="#f4f4f4"/><path d="M3 4.5h10M3 6h10" stroke="#ccc" stroke-width="0.6"/><rect x="3.5" y="9.5" width="9" height="6" fill="#ddd" stroke="#444"/><rect x="5" y="10.5" width="2" height="3.5" fill="#3a6ab0" stroke="#333" stroke-width="0.6"/></svg>
<svg style="left:104px;top:56px" width="16" height="16" viewBox="0 0 16 16" ><rect x="4" y="0.5" width="8" height="7" fill="#fafafa" stroke="#777"/><path d="M5.5 3h5M5.5 5h5" stroke="#999" stroke-width="0.8"/><path d="M1 9.5q0-2 2.5-2.5h9q2.5 0.5 2.5 2.5v5.5h-14z" fill="#e8e8e4" stroke="#666"/><path d="M3 12.5h10" stroke="#444" stroke-width="1.2"/></svg>
<svg style="left:144px;top:56px" width="16" height="16" viewBox="0 0 16 16" ><path d="M4.5 0.5h6l3.5 3.5v11.5h-9.5z" fill="url(#gdoc)" stroke="#111" stroke-linejoin="round" stroke-width="1.1"/><path d="M10.5 0.5v3.5h3.5" fill="#fff" stroke="#111" stroke-width="0.9"/><path d="M0 8h7" stroke="#000" stroke-width="1.2"/><path d="M6 5l4 3-4 3z" fill="#000"/></svg>
<svg style="left:172px;top:56px" width="16" height="16" viewBox="0 0 16 16" ><path d="M0.5 0.5h6l3.5 3.5v11.5h-9.5z" fill="url(#gdoc)" stroke="#111" stroke-linejoin="round" stroke-width="1.1"/><path d="M6.5 0.5v3.5h3.5" fill="#fff" stroke="#111" stroke-width="0.9"/><path d="M6 8h6" stroke="#000" stroke-width="1.2"/><path d="M12 5l4 3-4 3z" fill="#000"/></svg>
<svg style="left:212px;top:56px" width="16" height="16" viewBox="0 0 16 16" ><path d="M7 1L0.5 7.5 7 14v-3.5q4.5-0.5 4.5 3.5 0 1.5-1 2.5 4.5-1 4.5-5 0-4.5-8-5z" fill="#dcdcd6" stroke="#cfcfc8" stroke-width="0.8"/></svg>
<svg style="left:240px;top:56px" width="16" height="16" viewBox="0 0 16 16" ><path d="M9 1l6.5 6.5L9 14v-3.5q-4.5-0.5-4.5 3.5 0 1.5 1 2.5-4.5-1-4.5-5 0-4.5 8-5z" fill="#dcdcd6" stroke="#cfcfc8" stroke-width="0.8"/></svg>
<svg style="left:280px;top:56px" width="16" height="16" viewBox="0 0 16 16" ><path d="M0.5 0.5h8l2 2v9h-10z" fill="#f6f6f6" stroke="#b8b8b8"/><path d="M4.5 3.5h8l3 3v9h-11z" fill="#f8f8f8" stroke="#a8a8a8"/><path d="M6.5 7h6M6.5 9h6M6.5 11h6" stroke="#c4c4c4" stroke-width="0.8"/></svg>
<svg style="left:308px;top:56px" width="16" height="16" viewBox="0 0 16 16" ><path d="M2 0.5L9 11M14 0.5L7 11" stroke="#9a9a9a" stroke-width="1.6"/><path d="M2 0.5L8 10" stroke="#e4e4e4" stroke-width="0.6"/><rect x="0.5" y="9.5" width="6" height="6" rx="2" fill="#c58a20" stroke="#9a6510"/><rect x="9.5" y="9.5" width="6" height="6" rx="2" fill="#c58a20" stroke="#9a6510"/><circle cx="3.5" cy="12.5" r="1.2" fill="#f2f2f2"/><circle cx="12.5" cy="12.5" r="1.2" fill="#f2f2f2"/></svg>
<svg style="left:336px;top:56px" width="16" height="16" viewBox="0 0 16 16" ><rect x="0.5" y="1.5" width="14" height="14" rx="1.5" fill="#c0841a" stroke="#8a5a10"/><rect x="2.5" y="3.5" width="10" height="10.5" fill="#f4f4f4" stroke="#999" stroke-width="0.6"/><rect x="5" y="0.5" width="5" height="2.5" fill="#aaa" stroke="#666" stroke-width="0.6"/><path d="M5 6h6M5 8h6M5 10h4" stroke="#aaa" stroke-width="0.7"/></svg>
<svg style="left:376px;top:56px" width="16" height="16" viewBox="0 0 16 16" ><circle cx="7.4" cy="7.4" r="6.6" fill="url(#glens)" stroke="#111" stroke-width="1.5"/><rect x="3.3" y="4.5" width="8.5" height="6" fill="#fff" stroke="#111" stroke-dasharray="1 1" stroke-width="1"/><path d="M12.2 12.2L14.4 14.4" stroke="#000" stroke-width="2.6" stroke-linecap="round"/></svg>
<svg style="left:404px;top:56px" width="16" height="16" viewBox="0 0 16 16" ><circle cx="7.4" cy="7.4" r="6.6" fill="url(#glens)" stroke="#111" stroke-width="1.5"/><rect x="3.5" y="3.5" width="4.5" height="4.5" fill="#f8d850" stroke="#111" stroke-width="1"/><rect x="6.8" y="6.8" width="4.5" height="4.5" fill="#f8d850" stroke="#111" stroke-width="1"/><path d="M12.2 12.2L14.4 14.4" stroke="#000" stroke-width="2.6" stroke-linecap="round"/></svg>
<svg style="left:432px;top:56px" width="16" height="16" viewBox="0 0 16 16" ><circle cx="7.4" cy="7.4" r="6.6" fill="url(#glens)" stroke="#111" stroke-width="1.5"/><defs><linearGradient id="gzp" x1="0" y1="0" x2="1" y2="1"><stop offset="0" stop-color="#fff"/><stop offset="1" stop-color="#c8c8c8"/></linearGradient></defs><rect x="4.5" y="3.3" width="6" height="8" fill="url(#gzp)" stroke="#111" stroke-width="1.1"/><path d="M12.2 12.2L14.4 14.4" stroke="#000" stroke-width="2.6" stroke-linecap="round"/></svg>
<svg style="left:472px;top:56px" width="16" height="16" viewBox="0 0 16 16" ><rect x="0.5" y="0.5" width="9" height="9" fill="url(#gblue)" stroke="#222"/><rect x="4.5" y="4.5" width="11" height="11" fill="url(#gblue)" stroke="#111" stroke-width="1.1"/></svg>
<svg style="left:500px;top:56px" width="16" height="16" viewBox="0 0 16 16" ><rect x="0.5" y="0.5" width="9" height="9" fill="url(#gblue)" stroke="#222"/><rect x="4.5" y="4.5" width="11" height="11" fill="url(#gblue)" stroke="#111" stroke-width="1.1"/><path d="M8 9.5v-1.5a2 2 0 0 1 4 0v1.5" fill="none" stroke="#111"/><rect x="7" y="9.5" width="6" height="4" fill="#f8c020" stroke="#111" stroke-width="0.9"/></svg>
<svg style="left:528px;top:56px" width="16" height="16" viewBox="0 0 16 16" ><rect x="0.5" y="0.5" width="9" height="9" fill="url(#gblue)" stroke="#222"/><rect x="4.5" y="4.5" width="11" height="11" fill="url(#gblue)" stroke="#111" stroke-width="1.1"/><path d="M8 8v-1a2 2 0 0 1 4 0" fill="none" stroke="#111"/><rect x="7" y="9.5" width="6" height="4" fill="#40b040" stroke="#111" stroke-width="0.9"/></svg>
<svg style="left:568px;top:56px" width="16" height="16" viewBox="0 0 16 16" ><rect x="1.5" y="7.5" width="8" height="6" fill="#c8d8e8" stroke="#333"/><circle cx="10.5" cy="5.5" r="4" fill="url(#glens)" stroke="#333"/><rect x="0" y="0" width="2" height="2" fill="#000"/><rect x="14" y="0" width="2" height="2" fill="#000"/><rect x="0" y="14" width="2" height="2" fill="#000"/><rect x="14" y="14" width="2" height="2" fill="#000"/></svg>
<svg style="left:596px;top:56px" width="16" height="16" viewBox="0 0 16 16" ><rect x="1.5" y="7.5" width="8" height="6" fill="#f8d040" stroke="#333"/><circle cx="10.5" cy="5.5" r="4" fill="url(#glens)" stroke="#333"/><rect x="0" y="0" width="2" height="2" fill="#000"/><rect x="14" y="0" width="2" height="2" fill="#000"/><rect x="0" y="14" width="2" height="2" fill="#000"/><rect x="14" y="14" width="2" height="2" fill="#000"/><rect x="0" y="5" width="2" height="2" fill="#000"/><rect x="14" y="10" width="2" height="2" fill="#000"/><rect x="3" y="10" width="2" height="2" fill="#000"/></svg>
<svg style="left:636px;top:56px" width="16" height="16" viewBox="0 0 16 16" ><path d="M0.5 0.5h15L1 15.5z" fill="#fff" stroke="#000" stroke-width="1.2"/><path d="M1 15.5L15.5 1v1L2 15.5z" fill="#000"/><path d="M3 14L13 4l2 0.5-9 10z" fill="#444"/><path d="M13 1.5l2.5 0.5-1.5 3-2-1z" fill="#f0b000"/></svg>
<svg style="left:664px;top:56px" width="16" height="16" viewBox="0 0 16 16" ><path d="M0.5 0.5h15v4.5h-1.5q-0.5-2.5-3-2.5h-1.5v10.5q0 1 2 1.2v1.3h-7v-1.3q2-0.2 2-1.2v-10.5h-1.5q-2.5 0-3 2.5h-1.5z" fill="#000"/></svg>
<svg style="left:692px;top:56px" width="16" height="16" viewBox="0 0 16 16" ><path d="M0.5 9.5l5-2h10l-0.5 5.5h-11z" fill="#fff" stroke="#222" stroke-width="0.9"/><path d="M0.5 6.5l5-2h10l-0.5 5.5h-11z" fill="#fff" stroke="#222" stroke-width="0.9"/><path d="M0.5 3.5l5-2h10l-0.5 5.5h-11z" fill="#fff" stroke="#222" stroke-width="0.9"/></svg>
<svg style="left:720px;top:56px" width="16" height="16" viewBox="0 0 16 16" ><rect x="0.5" y="0.5" width="15" height="15" fill="#f2f2ee" stroke="#111" stroke-width="1.1"/><rect x="1.5" y="1.5" width="13" height="2" fill="#9ab8e0"/><path d="M6 6l-3 3 3 3M10 6l3 3-3 3" fill="none" stroke="#333" stroke-width="1.1"/></svg>
<svg style="left:748px;top:56px" width="16" height="16" viewBox="0 0 16 16" ><path d="M1 0v16" stroke="#d02020" stroke-width="1.2"/><rect x="2.5" y="1.5" width="5" height="3" fill="#b8cce4" stroke="#333" stroke-width="0.8"/><rect x="2.5" y="6.5" width="12" height="3" fill="#b8cce4" stroke="#333" stroke-width="0.8"/><rect x="2.5" y="11.5" width="9" height="3" fill="#b8cce4" stroke="#333" stroke-width="0.8"/></svg>
<svg style="left:788px;top:56px" width="16" height="16" viewBox="0 0 16 16" ><path d="M3 2l10 11" stroke="#888" stroke-width="2.2"/><path d="M13 2L3 12" stroke="#888" stroke-width="2.2"/><circle cx="12.5" cy="2.5" r="2.2" fill="none" stroke="#888" stroke-width="1.3"/><circle cx="13" cy="13" r="2.2" fill="none" stroke="#888" stroke-width="1.3"/><path d="M6 10L2 14" stroke="#2a60c0" stroke-width="2.6" stroke-linecap="round"/></svg>
<svg style="left:816px;top:56px" width="16" height="16" viewBox="0 0 16 16" ><path d="M1.5 0.5h9l4 4v11h-13z" fill="#f8f8f8" stroke="#999"/><path d="M4.5 3v3.5l2 1.5v6M10.5 3v3.5l-2 1.5" fill="none" stroke="#777" stroke-width="1.4"/><rect x="5.5" y="12.5" width="3" height="3" fill="none" stroke="#2050c0"/></svg>
<svg width="0" height="0" style="left:0;top:0"><defs>
<linearGradient id="gtweak" x1="0" y1="0" x2="0" y2="1"><stop offset="0" stop-color="#6a6a6a"/><stop offset="1" stop-color="#d8d8d8"/></linearGradient>
<linearGradient id="gorange" x1="0" y1="0" x2="1" y2="1"><stop offset="0" stop-color="#ffe27a"/><stop offset="1" stop-color="#e89000"/></linearGradient>
<linearGradient id="grect" x1="0" y1="0" x2="1" y2="1"><stop offset="0" stop-color="#f4f8fc"/><stop offset="1" stop-color="#8eaed0"/></linearGradient>
<linearGradient id="gbox" x1="0" y1="0" x2="1" y2="1"><stop offset="0" stop-color="#9090d0"/><stop offset="1" stop-color="#30307a"/></linearGradient>
<radialGradient id="gcirc" cx="0.45" cy="0.3" r="0.8"><stop offset="0" stop-color="#ffffff"/><stop offset="1" stop-color="#f8a0b0"/></radialGradient>
<linearGradient id="gstar" x1="0" y1="0" x2="1" y2="1"><stop offset="0" stop-color="#fffad0"/><stop offset="1" stop-color="#e8d050"/></linearGradient>
<linearGradient id="gpenc" x1="0" y1="0" x2="1" y2="0"><stop offset="0" stop-color="#ffe860"/><stop offset="1" stop-color="#e8a000"/></linearGradient>
<linearGradient id="gpen" x1="0" y1="0" x2="1" y2="0"><stop offset="0" stop-color="#b8d8f0"/><stop offset="1" stop-color="#3a78b0"/></linearGradient>
<linearGradient id="ggreen" x1="0" y1="0" x2="1" y2="0"><stop offset="0" stop-color="#2a8a10"/><stop offset="0.5" stop-color="#8ae060"/><stop offset="1" stop-color="#3a9a20"/></linearGradient>
<linearGradient id="geraser" x1="0" y1="0" x2="0" y2="1"><stop offset="0" stop-color="#fce8e0"/><stop offset="1" stop-color="#f0a888"/></linearGradient>
<linearGradient id="gbucket" x1="0" y1="0" x2="1" y2="1"><stop offset="0" stop-color="#c0e0f0"/><stop offset="1" stop-color="#3a70a8"/></linearGradient>
<linearGradient id="ggrad" x1="0" y1="0" x2="1" y2="1"><stop offset="0" stop-color="#ffffff"/><stop offset="1" stop-color="#38a048"/></linearGradient>
</defs></svg>
<div style="left:5px;top:127px;width:30px;height:30px;background:linear-gradient(#dedede,#c6c6c6);border:1px solid #8c8c8c;border-radius:4px;"></div>
<svg style="left:8px;top:130px" width="24" height="24" viewBox="0 0 24 24" ><path d="M6 3v17l4.5-4 3 6.5 2.5-1.2-3-6.3h6z" fill="#000" stroke="#fff" stroke-width="0.7"/></svg>
<svg style="left:8px;top:162px" width="24" height="24" viewBox="0 0 24 24" ><path d="M3.5 22Q3.5 12 7 8.5Q11 4.5 19.5 4.5" fill="none" stroke="#666" stroke-width="0.9"/><rect x="5.5" y="5.5" width="5.5" height="5.5" fill="#9a9aff" stroke="#0000f0" stroke-width="1.3"/><rect x="1.5" y="19.5" width="4" height="4" fill="#e0e0ff" stroke="#6a6aff"/><rect x="17.5" y="2.5" width="4" height="4" fill="#e0e0ff" stroke="#6a6aff"/><path d="M10.5 9.5L21 17.5 15.5 20.5z" fill="#000"/></svg>
<svg style="left:8px;top:194px" width="24" height="24" viewBox="0 0 24 24" ><defs><linearGradient id="gtw2" x1="0" y1="0" x2="0" y2="1"><stop offset="0" stop-color="#7a7a7a"/><stop offset="1" stop-color="#e4e4e4"/></linearGradient></defs><path d="M1 14.5q3.5 0 5-5t7-7.5q5.5 0 5.5 5 0 3-2.5 3-2.2 0-2.2-2.2 0 5.7 6.2 5.7v10h-19z" fill="url(#gtw2)"/><path d="M1 14.5q3.5 0 5-5t7-7.5q5.5 0 5.5 5 0 3-2.5 3-2.2 0-2.2-2.2 0 5.7 6.2 5.7" fill="none" stroke="#fff" stroke-width="2.2"/><path d="M1 14.5q3.5 0 5-5t7-7.5q5.5 0 5.5 5 0 3-2.5 3-2.2 0-2.2-2.2 0 5.7 6.2 5.7" fill="none" stroke="#222" stroke-width="0.9"/></svg>
<svg style="left:8px;top:226px" width="24" height="24" viewBox="0 0 24 24" ><circle cx="8.5" cy="8.5" r="7" fill="url(#glens)" stroke="#111" stroke-width="1.3"/><path d="M13.5 13.5l8 8" stroke="#222" stroke-width="4.4" stroke-linecap="round"/><path d="M14.3 14.3l7 7" stroke="url(#gorange)" stroke-width="2.6" stroke-linecap="round"/><path d="M4.5 7q1-3.5 5-3.8" fill="none" stroke="#fff" stroke-width="1.3"/></svg>
<svg style="left:8px;top:258px" width="24" height="24" viewBox="0 0 24 24" ><rect x="2.5" y="2.5" width="19" height="19" fill="url(#grect)" stroke="#000" stroke-width="1.2"/><rect x="3.8" y="3.8" width="16.4" height="16.4" fill="none" stroke="#fff" stroke-width="0.8"/></svg>
<svg style="left:8px;top:290px" width="24" height="24" viewBox="0 0 24 24" ><defs><linearGradient id="gbx1" x1="0" y1="0" x2="0" y2="1"><stop offset="0" stop-color="#b4b4e4"/><stop offset="1" stop-color="#6c6cb4"/></linearGradient><linearGradient id="gbx2" x1="0" y1="0" x2="1" y2="1"><stop offset="0" stop-color="#f4f4ff"/><stop offset="1" stop-color="#b8b8e8"/></linearGradient></defs><path d="M13.5 0.6L22.5 7.2 22 18.5 10.6 22.6 2 17.2 2 4.5z" fill="url(#gbx1)" stroke="#333" stroke-width="1"/><path d="M13.5 0.8L22.3 7.3 21.8 17.8 15 13.5z" fill="url(#gbx2)"/><path d="M15 13.5L21.8 17.8 10.6 22.2 3 17z" fill="#34347a"/><path d="M13.5 0.6L22.5 7.2 22 18.5 10.6 22.6 2 17.2 2 4.5z" fill="none" stroke="#3a3a3a" stroke-width="1"/></svg>
<svg style="left:8px;top:322px" width="24" height="24" viewBox="0 0 24 24" ><circle cx="12" cy="12" r="9.5" fill="url(#gcirc)" stroke="#000" stroke-width="1.1"/></svg>
<svg style="left:8px;top:354px" width="24" height="24" viewBox="0 0 24 24" ><path d="M0.8 7.5L8 1 15.5 5.5 13.5 14.5 4.5 14.8z" fill="url(#gstar)" stroke="#222" stroke-width="1"/><path d="M15 6l2.4 5.2 5.8 0.6-4.4 3.8 1.3 5.8-5.1-3-5 3 1.2-5.8-4.3-3.8 5.7-0.6z" fill="url(#gstar)" stroke="#222" stroke-width="1" stroke-linejoin="round"/></svg>
<svg style="left:8px;top:386px" width="24" height="24" viewBox="0 0 24 24" ><path d="M12.94 12.57 L12.95 12.68 L12.95 12.80 L12.94 12.91 L12.92 13.03 L12.88 13.16 L12.84 13.28 L12.78 13.40 L12.70 13.51 L12.62 13.62 L12.52 13.73 L12.41 13.83 L12.29 13.92 L12.16 14.00 L12.01 14.07 L11.86 14.13 L11.70 14.18 L11.53 14.22 L11.36 14.23 L11.18 14.24 L11.00 14.23 L10.81 14.20 L10.63 14.15 L10.44 14.09 L10.26 14.01 L10.09 13.91 L9.91 13.80 L9.75 13.67 L9.59 13.52 L9.45 13.36 L9.32 13.18 L9.20 12.99 L9.09 12.79 L9.01 12.57 L8.94 12.34 L8.89 12.11 L8.85 11.87 L8.84 11.62 L8.85 11.36 L8.89 11.11 L8.94 10.85 L9.02 10.60 L9.12 10.35 L9.24 10.11 L9.38 9.87 L9.55 9.65 L9.73 9.43 L9.94 9.23 L10.17 9.05 L10.41 8.88 L10.67 8.73 L10.95 8.60 L11.24 8.49 L11.54 8.41 L11.85 8.35 L12.17 8.32 L12.49 8.32 L12.82 8.34 L13.15 8.39 L13.47 8.47 L13.79 8.57 L14.11 8.71 L14.42 8.87 L14.71 9.06 L15.00 9.27 L15.26 9.51 L15.51 9.78 L15.74 10.07 L15.95 10.37 L16.13 10.70 L16.28 11.05 L16.41 11.41 L16.51 11.78 L16.58 12.17 L16.61 12.56 L16.61 12.96 L16.58 13.36 L16.52 13.77 L16.42 14.17 L16.29 14.56 L16.12 14.94 L15.92 15.32 L15.69 15.68 L15.43 16.02 L15.14 16.34 L14.82 16.64 L14.47 16.91 L14.09 17.16 L13.70 17.37 L13.28 17.56 L12.85 17.71 L12.40 17.83 L11.94 17.91 L11.47 17.95 L11.00 17.95 L10.52 17.91 L10.05 17.84 L9.57 17.72 L9.11 17.56 L8.65 17.37 L8.21 17.14 L7.79 16.86 L7.39 16.56 L7.01 16.21 L6.66 15.84 L6.34 15.43 L6.05 14.99 L5.79 14.53 L5.58 14.05 L5.40 13.55 L5.26 13.03 L5.17 12.49 L5.12 11.95 L5.11 11.40 L5.15 10.84 L5.24 10.29 L5.37 9.75 L5.55 9.21 L5.77 8.68 L6.03 8.18 L6.34 7.69 L6.70 7.22 L7.09 6.79 L7.52 6.38 L7.98 6.01 L8.47 5.67 L9.00 5.38 L9.55 5.13 L10.12 4.92 L10.72 4.76 L11.32 4.64 L11.94 4.58 L12.57 4.57 L13.20 4.61 L13.83 4.70 L14.45 4.85 L15.06 5.04 L15.66 5.29 L16.23 5.59 L16.79 5.93 L17.32 6.32 L17.81 6.76 L18.28 7.24 L18.70 7.76 L19.08 8.31 L19.42 8.90 L19.71 9.52 L19.95 10.16 L20.14 10.83 L20.27 11.51 L20.35 12.20 L20.37 12.90 L20.33 13.61 L20.24 14.31 L20.08 15.01 L19.87 15.69 L19.60 16.36 L19.28 17.01 L18.90 17.64 L18.47 18.23 L17.99 18.79 L17.46 19.31 L16.89 19.79 L16.28 20.22 L15.63 20.61 L14.95 20.94 L14.23 21.21 L13.50 21.43 L12.75 21.58 L11.98 21.68 L11.20 21.71 L10.42 21.68 L9.64 21.58 L8.87 21.42 L8.11 21.20 L7.36 20.91 L6.64 20.56 L5.95 20.15 L5.29 19.68 L4.66 19.16 L4.08 18.59 L3.54 17.96 L3.06 17.30 L2.63 16.59 L2.25 15.84 L1.94 15.06 L1.69 14.26 L1.51 13.43 L1.40 12.59 L1.35 11.74 L1.37 10.88 L1.47 10.03 L1.63 9.18 L1.87 8.34 L2.17 7.52 L2.54 6.73 L2.98 5.96 L3.48 5.23 L4.04 4.54 L4.66 3.90 L5.33 3.30" fill="none" stroke="#111" stroke-width="1.3"/></svg>
<svg style="left:8px;top:418px" width="24" height="24" viewBox="0 0 24 24" ><path d="M1 2H6.5L1.5 12H7.5Q6 22 12 23Q18 23.5 20.5 18" fill="none" stroke="#111" stroke-width="1.3" stroke-linejoin="round"/><path d="M18.96 0.27L25.04 3.73 18.54 15.23 12.46 11.77z" fill="url(#gpenc)" stroke="#111" stroke-width="1"/><path d="M12.46 11.77L18.54 15.23 11.5 20.5z" fill="#fbe6c0" stroke="#111" stroke-width="1"/><path d="M11.5 20.5l1-3.2 1.8 1z" fill="#111"/></svg>
<svg style="left:8px;top:450px" width="24" height="24" viewBox="0 0 24 24" ><path d="M1.3 1.2H13.5M1.3 1.2Q12 8 11 15.5Q10.5 20 4 21.5M4 21.5H11" fill="none" stroke="#111" stroke-width="1.1"/><rect x="0.5" y="19.5" width="4" height="4" fill="#fff" stroke="#111" stroke-width="1.2"/><circle cx="11.6" cy="21.5" r="1.3" fill="#fff" stroke="#111"/><path d="M13.4 7.6L18.2 0.4 23.9 6.4 19.4 12.5z" fill="url(#gpen)" stroke="#111" stroke-width="1"/><path d="M13.2 8.5l5.8 4.2-1.2 1.8-5.6-4z" fill="#f0c840" stroke="#111" stroke-width="0.8"/><path d="M12.4 10.5l4.8 3.5-4.2 6.3-1.6-1.2z" fill="#ddd" stroke="#111" stroke-width="0.8"/></svg>
<svg style="left:8px;top:482px" width="24" height="24" viewBox="0 0 24 24" ><path d="M0 0.5Q6 -0.5 10.5 3.5 5.5 8 5.8 14 6.2 20 12 21.5 17 22.5 23 19.8L22.7 20.5Q16 24.5 9.5 23.5 2 22 1.5 13.5 1 7.5 4.5 3 2.5 1.5 0 0.5z" fill="#111"/><path d="M15 1.5L24 3.1 21 9 13.5 6z" fill="#5a90c8" stroke="#111" stroke-width="0.8"/><path d="M13.5 6l7.5 3-0.8 1.5-7.5-3z" fill="#d01818"/><path d="M12.5 7.5L20.2 10.4 15 17.5 11 20 11 12z" fill="url(#gpenc)" stroke="#111" stroke-width="1"/><path d="M13.5 13.2l-1.8 5.5" stroke="#111" stroke-width="0.8"/><circle cx="14" cy="12.5" r="1.1" fill="#111"/></svg>
<svg style="left:8px;top:514px" width="24" height="24" viewBox="0 0 24 24" ><path d="M0.85 20.2L6.5 2.5H13.4L19.8 20.2H14.5L13.6 16.8H7.2L6.2 20.2zM8.1 13.6H12.6L10.4 7.2z" fill="#111"/><path d="M8 4.5H12" stroke="#555" stroke-width="0.8"/><path d="M17.8 1.3H23.1M20.5 1.3V22.3M17.8 22.3H23.1" stroke="#111" stroke-width="0.9"/></svg>
<svg style="left:8px;top:546px" width="24" height="24" viewBox="0 0 24 24" ><circle cx="3.7" cy="2.8" r="1.2" fill="#111"/><circle cx="2.9" cy="6.8" r="1.2" fill="#111"/><circle cx="4.5" cy="11.7" r="1.2" fill="#111"/><circle cx="6.9" cy="4" r="0.8" fill="#222"/><circle cx="6.5" cy="7.5" r="0.9" fill="#222"/><circle cx="8.1" cy="10" r="0.7" fill="#333"/><circle cx="9" cy="5.8" r="0.6" fill="#555"/><circle cx="10" cy="8.5" r="0.5" fill="#777"/><path d="M11.2 12.2L22.5 12.8 23.5 21.5Q17 22.5 12 20.5z" fill="url(#ggreen)" stroke="#111" stroke-width="1"/><path d="M19.5 13.5l1.2 7.5" stroke="#fff" stroke-width="1" opacity="0.8"/><path d="M13 9.5Q13 5 15.4 5 17.8 5 17.8 9.5" fill="#fff" stroke="#111" stroke-width="1.1"/><path d="M12.6 9.8L18.6 10.4 18.8 12 12.4 11.6z" fill="#e8b020" stroke="#111" stroke-width="0.6"/></svg>
<svg style="left:8px;top:578px" width="24" height="24" viewBox="0 0 24 24" ><path d="M11.8 0.6L21 5.6 11.4 22.4 2.2 16.9z" fill="url(#geraser)" stroke="#111" stroke-width="1.1" stroke-linejoin="round"/></svg>
<svg style="left:8px;top:610px" width="24" height="24" viewBox="0 0 24 24" ><ellipse cx="10.1" cy="21.4" rx="9.8" ry="2" fill="url(#ggrad)" stroke="#111" stroke-width="0.9"/><path d="M3.5 7.5L16.6 0.5 21.9 4.9 22.5 12.2 9.7 17.8z" fill="url(#gbucket)" stroke="#111" stroke-width="1.1" stroke-linejoin="round"/><path d="M3.5 7.5Q5 13 9.7 17.8 8.5 18.5 8.5 20.5L7 20.5Q7.5 17 5 14 3 11 3.5 7.5z" fill="#7ccf7a" stroke="#111" stroke-width="0.8"/><path d="M7.7 0.9L11 10.5" stroke="#333" stroke-width="1.2"/><circle cx="11" cy="10.5" r="0.9" fill="#333"/></svg>
<svg style="left:8px;top:642px" width="24" height="24" viewBox="0 0 24 24" ><defs><linearGradient id="ggr2" x1="0" y1="1" x2="1" y2="0"><stop offset="0" stop-color="#ffffff"/><stop offset="0.45" stop-color="#bfe6c4"/><stop offset="1" stop-color="#2ea043"/></linearGradient></defs><rect x="1" y="0.8" width="21.7" height="21.8" fill="url(#ggr2)"/><path d="M1 0.8h21.7v21.8" fill="none" stroke="#4ab058" stroke-width="0.8"/><path d="M6 6.5L18 17.5" stroke="#222" stroke-width="1.1"/><rect x="3.9" y="4.5" width="4" height="3.8" rx="0.8" fill="#fff" stroke="#222" stroke-width="1.2"/><rect x="16" y="15.5" width="4" height="4" rx="0.8" fill="#fff" stroke="#222" stroke-width="1.2"/></svg>
<svg style="left:8px;top:674px" width="24" height="24" viewBox="0 0 24 24" ><path d="M18 2.5Q20.5 -0.5 23 1.5 25 4 21.5 6.5L20 8.5 15.5 4z" fill="#111"/><path d="M14.6 3.3L21.5 10" stroke="#111" stroke-width="2.2"/><path d="M17 7L5.7 17.7" stroke="#111" stroke-width="3.2" stroke-linecap="round"/><path d="M16.5 7.5L6 17.3" stroke="#a8c8ec" stroke-width="1.3"/><path d="M5.5 19.3Q3 22 4.2 23.2 6 24 7 22.5 7.5 21 5.5 19.3z" fill="#8ab0e0" stroke="#111" stroke-width="0.7"/></svg>
<svg style="left:8px;top:706px" width="24" height="24" viewBox="0 0 24 24" ><path d="M12 5.5Q16 6 18 9v6M7.5 9l-2 6" fill="none" stroke="#111" stroke-width="1.1"/><rect x="5.5" y="1.5" width="7.5" height="6.5" fill="url(#grect)" stroke="#111" stroke-width="1.3"/><rect x="0.8" y="15.5" width="7.5" height="6.5" fill="url(#grect)" stroke="#111" stroke-width="1.3"/><rect x="15.2" y="15.5" width="7.5" height="6.5" fill="url(#grect)" stroke="#111" stroke-width="1.3"/><rect x="8.8" y="9.5" width="7" height="4.5" fill="#f8c820" stroke="#111" stroke-width="1.1"/></svg>
<svg style="left:6px;top:119px" width="24" height="6" shape-rendering="crispEdges"><rect x="0" y="0" width="1" height="1" fill="#9a9a9a"/><rect x="1" y="1" width="1" height="1" fill="#fff"/><rect x="3" y="0" width="1" height="1" fill="#9a9a9a"/><rect x="4" y="1" width="1" height="1" fill="#fff"/><rect x="6" y="0" width="1" height="1" fill="#9a9a9a"/><rect x="7" y="1" width="1" height="1" fill="#fff"/><rect x="9" y="0" width="1" height="1" fill="#9a9a9a"/><rect x="10" y="1" width="1" height="1" fill="#fff"/><rect x="12" y="0" width="1" height="1" fill="#9a9a9a"/><rect x="13" y="1" width="1" height="1" fill="#fff"/><rect x="15" y="0" width="1" height="1" fill="#9a9a9a"/><rect x="16" y="1" width="1" height="1" fill="#fff"/><rect x="18" y="0" width="1" height="1" fill="#9a9a9a"/><rect x="19" y="1" width="1" height="1" fill="#fff"/><rect x="21" y="0" width="1" height="1" fill="#9a9a9a"/><rect x="22" y="1" width="1" height="1" fill="#fff"/><rect x="0" y="3" width="1" height="1" fill="#9a9a9a"/><rect x="1" y="4" width="1" height="1" fill="#fff"/><rect x="3" y="3" width="1" height="1" fill="#9a9a9a"/><rect x="4" y="4" width="1" height="1" fill="#fff"/><rect x="6" y="3" width="1" height="1" fill="#9a9a9a"/><rect x="7" y="4" width="1" height="1" fill="#fff"/><rect x="9" y="3" width="1" height="1" fill="#9a9a9a"/><rect x="10" y="4" width="1" height="1" fill="#fff"/><rect x="12" y="3" width="1" height="1" fill="#9a9a9a"/><rect x="13" y="4" width="1" height="1" fill="#fff"/><rect x="15" y="3" width="1" height="1" fill="#9a9a9a"/><rect x="16" y="4" width="1" height="1" fill="#fff"/><rect x="18" y="3" width="1" height="1" fill="#9a9a9a"/><rect x="19" y="4" width="1" height="1" fill="#fff"/><rect x="21" y="3" width="1" height="1" fill="#9a9a9a"/><rect x="22" y="4" width="1" height="1" fill="#fff"/></svg>
<svg style="left:20px;top:89px" width="16" height="16" viewBox="0 0 16 16" ><path d="M1.7 0.7h8.3l4.3 4.3v10h-12.6z" fill="#fff" stroke="#8a8a86" stroke-width="1.2" stroke-linejoin="round"/><path d="M10 0.7v4.3h4.3" fill="#f4f4f4" stroke="#8a8a86" stroke-width="1"/><path d="M4 4h5.2v2h2.8v7h-8z" fill="#2a60b8"/><rect x="4.8" y="5" width="3.2" height="1" fill="#fff"/><rect x="4.8" y="7" width="6.3" height="1" fill="#fff"/><rect x="4.8" y="9" width="6.3" height="1" fill="#fff"/><rect x="4.8" y="11" width="6.3" height="1" fill="#fff"/></svg>
<svg style="left:48px;top:89px" width="16" height="16" viewBox="0 0 16 16" ><rect x="0.75" y="0.75" width="14.5" height="14.5" fill="none" stroke="#000" stroke-width="1.5" stroke-dasharray="2.2 1.4"/><path d="M3 11.5l1.5-1.5h6.5l2 2.5-1 0.5h-7z" fill="#e8e8e8" stroke="#555" stroke-width="0.8"/><path d="M3 8.5l1.5-1.5h6.5l2 2.5-1 0.5h-7z" fill="#eee" stroke="#555" stroke-width="0.8"/><path d="M3 5.5l1.5-1.5h6.5l2 2.5-1 0.5h-7z" fill="#f4f4f4" stroke="#555" stroke-width="0.8"/></svg>
<svg style="left:76px;top:89px" width="16" height="16" viewBox="0 0 16 16" ><rect x="0.5" y="0.5" width="15" height="15" fill="none" stroke="#c8b8b8" stroke-dasharray="1.5 1"/><rect x="2.5" y="7.5" width="8" height="6" fill="#e6e6e6" stroke="#bbb"/><circle cx="10" cy="6" r="3.5" fill="#ececec" stroke="#bbb"/></svg>
<svg style="left:116px;top:89px" width="16" height="16" viewBox="0 0 16 16" ><path d="M8 1l6 10-8 1z" fill="#b8b8b8"/><path d="M2 12l12-1-2 4h-7z" fill="#d4d4d4"/><path d="M4 4q-2 0-2 3" fill="none" stroke="#b8b8b8" stroke-width="1.3"/><path d="M0 6l2 3 2-3z" fill="#b8b8b8"/></svg>
<svg style="left:144px;top:89px" width="16" height="16" viewBox="0 0 16 16" ><path d="M8 1l-6 10 8 1z" fill="#b8b8b8"/><path d="M14 12l-12-1 2 4h7z" fill="#d4d4d4"/><path d="M12 4q2 0 2 3" fill="none" stroke="#b8b8b8" stroke-width="1.3"/><path d="M16 6l-2 3-2-3z" fill="#b8b8b8"/></svg>
<svg style="left:172px;top:89px" width="16" height="16" viewBox="0 0 16 16" ><path d="M7 1.5v13h-5.5z" fill="#b8b8b8"/><path d="M9.5 1.5v13h5.5z" fill="#e4e4e4" stroke="#b8b8b8"/><path d="M8.2 0v16" stroke="#b8b8b8" stroke-dasharray="1.5 1"/></svg>
<svg style="left:200px;top:89px" width="16" height="16" viewBox="0 0 16 16" ><path d="M14.5 1.5v5.5h-13z" fill="#e4e4e4" stroke="#b8b8b8"/><path d="M14.5 9v5.5l-13-5.5z" fill="#b8b8b8"/><path d="M0 8h16" stroke="#b8b8b8" stroke-dasharray="1.5 1"/></svg>
<svg style="left:240px;top:89px" width="16" height="16" viewBox="0 0 16 16" ><rect x="9" y="0.5" width="7" height="2" fill="#b0b0b0"/><rect x="9" y="3.5" width="7" height="2" fill="#b0b0b0"/><rect x="9" y="6.5" width="7" height="2" fill="#b0b0b0"/><rect x="9" y="9.5" width="7" height="2" fill="#b0b0b0"/><rect x="0.5" y="12.5" width="15" height="2" fill="#f0f0f0" stroke="#a8a8a8"/><path d="M3.5 0v9" stroke="#a8a8a8" stroke-width="1.1"/><path d="M1 8l2.5 3.5L6 8z" fill="#a8a8a8"/></svg>
<svg style="left:268px;top:89px" width="16" height="16" viewBox="0 0 16 16" ><rect x="9" y="0.5" width="7" height="2" fill="#b0b0b0"/><rect x="6" y="3.5" width="10" height="2" fill="#b0b0b0"/><rect x="9" y="6.5" width="7" height="2" fill="#b0b0b0"/><rect x="0.5" y="9.5" width="15" height="2" fill="#f0f0f0" stroke="#a8a8a8"/><rect x="9" y="13" width="7" height="2" fill="#b0b0b0"/><path d="M4 3l-2 3" stroke="#a8a8a8" stroke-width="1.1"/><path d="M0.5 5h4l-2 3z" fill="#a8a8a8"/></svg>
<svg style="left:296px;top:89px" width="16" height="16" viewBox="0 0 16 16" ><rect x="0" y="0.5" width="7" height="2" fill="#b0b0b0"/><rect x="0.5" y="3.5" width="15" height="2" fill="#f0f0f0" stroke="#a8a8a8"/><rect x="0" y="7" width="7" height="2" fill="#b0b0b0"/><rect x="0" y="10" width="10" height="2" fill="#b0b0b0"/><rect x="0" y="13" width="7" height="2" fill="#b0b0b0"/><path d="M12 12l1-4" stroke="#a8a8a8" stroke-width="1.1"/><path d="M10.5 9l2.5-3 2.5 3z" fill="#a8a8a8"/></svg>
<svg style="left:324px;top:89px" width="16" height="16" viewBox="0 0 16 16" ><rect x="0.5" y="0.5" width="15" height="2" fill="#f0f0f0" stroke="#a8a8a8"/><rect x="0" y="4" width="7" height="2" fill="#b0b0b0"/><rect x="0" y="7" width="7" height="2" fill="#b0b0b0"/><rect x="0" y="10" width="7" height="2" fill="#b0b0b0"/><rect x="0" y="13" width="7" height="2" fill="#b0b0b0"/><path d="M13 5v11" stroke="#a8a8a8" stroke-width="1.1"/><path d="M10.5 7l2.5-3.5 2.5 3.5z" fill="#a8a8a8"/></svg>
<svg style="left:624px;top:88px" width="16" height="18" viewBox="0 0 16 18" ><path d="M4 7.5v-3q0-3.5 3.5-3.5t3.5 3" fill="none" stroke="#111" stroke-width="1.4"/><path d="M2 8l10-1.5 1.5 7.5-10 1.5z" fill="#f0d040" stroke="#111" stroke-width="1"/><rect x="7" y="10" width="1.6" height="2.5" fill="#111"/></svg>
<svg style="left:855px;top:89px" width="16" height="16" viewBox="0 0 16 16" ><path d="M0 1.5h14.5v6.5M0 6.8h10.5v3" fill="none" stroke="#000" stroke-width="2.6"/><path d="M2.5 12.8h1.5M5 12.8h2M8 12.8h4" stroke="#000" stroke-width="1.6"/><path d="M11.5 10.2L16 12.8 11.5 15.4z" fill="#000"/></svg>
<svg style="left:883px;top:89px" width="16" height="16" viewBox="0 0 16 16" ><path d="M0 1.2h7q7.5 0 7.5 7.3M0 5.8h5.5q4.5 0 4.5 4" fill="none" stroke="#111" stroke-width="1.6"/><path d="M2.5 12.8h1.5M5 12.8h2M8 12.8h4" stroke="#000" stroke-width="1.6"/><path d="M11.5 10.2L16 12.8 11.5 15.4z" fill="#000"/></svg>
<svg style="left:911px;top:89px" width="16" height="16" viewBox="0 0 16 16" ><defs><linearGradient id="gaff" x1="0" y1="0" x2="0" y2="1"><stop offset="0" stop-color="#6a8ab8"/><stop offset="1" stop-color="#c8dcf4"/></linearGradient></defs><rect x="0" y="4" width="10" height="6" fill="url(#gaff)"/><path d="M0 1.5h14.5v6.5M0 6.5h10.5v3" fill="none" stroke="#1a2a3a" stroke-width="2.4"/><path d="M2.5 12.8h1.5M5 12.8h2M8 12.8h4" stroke="#000" stroke-width="1.6"/><path d="M11.5 10.2L16 12.8 11.5 15.4z" fill="#000"/></svg>
<svg style="left:939px;top:89px" width="16" height="16" viewBox="0 0 16 16" ><rect x="0" y="0" width="16" height="8.5" fill="#000"/><rect x="0" y="2.5" width="16" height="4" fill="#fff"/><path d="M0.5 4.5l2-2.2 2 2.2-2 2.2zM6 4.5l2-2.2 2 2.2-2 2.2zM11.5 4.5l2-2.2 2 2.2-2 2.2z" fill="#000"/><path d="M2.5 12.8h1.5M5 12.8h2M8 12.8h4" stroke="#000" stroke-width="1.6"/><path d="M11.5 10.2L16 12.8 11.5 15.4z" fill="#000"/></svg>
<svg style="left:1551px;top:120px" width="16" height="16" viewBox="0 0 16 16" ><circle cx="7" cy="7" r="6" fill="#f0f0ec" stroke="#222" stroke-width="1"/><text x="7" y="9.6" font-size="7" font-family="Liberation Sans" font-weight="bold" text-anchor="middle" fill="#111">1:1</text><path d="M11 11l4 4" stroke="#111" stroke-width="2" stroke-linecap="round"/></svg>
<svg style="left:1586px;top:119px" width="18" height="6" shape-rendering="crispEdges"><rect x="0" y="0" width="1" height="1" fill="#9a9a9a"/><rect x="1" y="1" width="1" height="1" fill="#fff"/><rect x="3" y="0" width="1" height="1" fill="#9a9a9a"/><rect x="4" y="1" width="1" height="1" fill="#fff"/><rect x="6" y="0" width="1" height="1" fill="#9a9a9a"/><rect x="7" y="1" width="1" height="1" fill="#fff"/><rect x="9" y="0" width="1" height="1" fill="#9a9a9a"/><rect x="10" y="1" width="1" height="1" fill="#fff"/><rect x="12" y="0" width="1" height="1" fill="#9a9a9a"/><rect x="13" y="1" width="1" height="1" fill="#fff"/><rect x="15" y="0" width="1" height="1" fill="#9a9a9a"/><rect x="16" y="1" width="1" height="1" fill="#fff"/><rect x="0" y="3" width="1" height="1" fill="#9a9a9a"/><rect x="1" y="4" width="1" height="1" fill="#fff"/><rect x="3" y="3" width="1" height="1" fill="#9a9a9a"/><rect x="4" y="4" width="1" height="1" fill="#fff"/><rect x="6" y="3" width="1" height="1" fill="#9a9a9a"/><rect x="7" y="4" width="1" height="1" fill="#fff"/><rect x="9" y="3" width="1" height="1" fill="#9a9a9a"/><rect x="10" y="4" width="1" height="1" fill="#fff"/><rect x="12" y="3" width="1" height="1" fill="#9a9a9a"/><rect x="13" y="4" width="1" height="1" fill="#fff"/><rect x="15" y="3" width="1" height="1" fill="#9a9a9a"/><rect x="16" y="4" width="1" height="1" fill="#fff"/></svg>
<div style="left:1581px;top:127px;width:26px;height:26px;background:linear-gradient(#dedede,#c6c6c6);border:1px solid #7c848a;border-radius:4px;"></div>
<div style="left:1581px;top:319px;width:26px;height:26px;background:linear-gradient(#dedede,#c6c6c6);border:1px solid #7c848a;border-radius:4px;"></div>
<div style="left:1581px;top:583px;width:26px;height:26px;background:linear-gradient(#dedede,#c6c6c6);border:1px solid #7c848a;border-radius:4px;"></div>
<div style="left:1581px;top:611px;width:26px;height:26px;background:linear-gradient(#dedede,#c6c6c6);border:1px solid #7c848a;border-radius:4px;"></div>
<div style="left:1586px;top:160px;width:16px;height:1px;background:#d8d8d8;"></div>
<div style="left:1586px;top:161px;width:16px;height:1px;background:#fff;"></div>
<div style="left:1586px;top:311px;width:16px;height:1px;background:#d8d8d8;"></div>
<div style="left:1586px;top:312px;width:16px;height:1px;background:#fff;"></div>
<div style="left:1586px;top:547px;width:16px;height:1px;background:#d8d8d8;"></div>
<div style="left:1586px;top:548px;width:16px;height:1px;background:#fff;"></div>
<svg style="left:1586px;top:132px" width="16" height="16" viewBox="0 0 16 16" ><path d="M4 4l7.5 7.5" stroke="#000" stroke-width="1.3"/><path d="M12.5 8.5v4h-4z" fill="#000"/><path d="M3.5 1l2.5 2.5-2.5 2.5-2.5-2.5z" fill="#c0c0ff" stroke="#0000ff" stroke-width="1.3"/><path d="M13.5 11l2.5 2.5-2.5 2.5-2.5-2.5z" fill="#c0c0ff" stroke="#008000" stroke-width="1.3"/></svg>
<svg style="left:1586px;top:171px" width="16" height="16" viewBox="0 0 16 16" ><path d="M4 4h12M4 4v9" stroke="#000" stroke-width="1.5" stroke-dasharray="1.6 1"/><path d="M4 1l3 3-3 3-3-3z" fill="#c0c0ff" stroke="#0000ff" stroke-width="1.3"/></svg>
<svg style="left:1586px;top:199px" width="16" height="16" viewBox="0 0 16 16" ><path d="M1 13.5h13M13.5 2v12" stroke="#c4c4c4" stroke-width="1.3" stroke-dasharray="1.6 1"/></svg>
<svg style="left:1586px;top:227px" width="16" height="16" viewBox="0 0 16 16" ><path d="M1 10.5h12M13.5 1v9" stroke="#c4c4c4" stroke-width="1.3" stroke-dasharray="1.6 1"/><circle cx="13.5" cy="10.5" r="2" fill="#ddd" stroke="#bbb"/></svg>
<svg style="left:1586px;top:255px" width="16" height="16" viewBox="0 0 16 16" ><path d="M1 13.5h13M13.5 8v6" stroke="#c4c4c4" stroke-width="1.1" stroke-dasharray="1.6 1"/><path d="M13.5 2v5" stroke="#c4c4c4" stroke-width="1.1"/><ellipse cx="13.5" cy="5" rx="1.8" ry="2.3" fill="#ddd" stroke="#bbb"/></svg>
<svg style="left:1586px;top:282px" width="16" height="16" viewBox="0 0 16 16" ><path d="M1 14.5h13M13.5 5v10" stroke="#aaa" stroke-width="1" stroke-dasharray="1.6 1"/><circle cx="5" cy="6.5" r="2" fill="none" stroke="#aaa"/></svg>
<svg style="left:1586px;top:323px" width="16" height="16" viewBox="0 0 16 16" ><path d="M2 9q2-4 6-3 3 1 4 6.5 1 2 4 2.5" fill="none" stroke="#555" stroke-width="1.1"/><path d="M9 1.5l2.5 2.5-2.5 2.5-2.5-2.5z" fill="#c0c0ff" stroke="#0000ff" stroke-width="1.3"/></svg>
<svg style="left:1586px;top:351px" width="16" height="16" viewBox="0 0 16 16" ><path d="M1 2q6 1 8 6 1 3 0 6l5-3M9 14l-2-2" fill="none" stroke="#008000" stroke-width="1.5"/></svg>
<svg style="left:1586px;top:379px" width="16" height="16" viewBox="0 0 16 16" ><path d="M1 13L15 3M1 10l14-2" stroke="#c8c8c8" stroke-width="0.9"/><circle cx="8" cy="8.5" r="1.8" fill="#ddd" stroke="#bbb"/></svg>
<svg style="left:1586px;top:408px" width="16" height="16" viewBox="0 0 16 16" ><path d="M1 1q6 1.5 7 7 1 4-3 6M8 12q4-2 7-4" fill="none" stroke="#444" stroke-width="1.1"/><path d="M7 9l2.5 2.5-2.5 2.5-2.5-2.5z" fill="#c0c0ff" stroke="#008000" stroke-width="1.3"/></svg>
<svg style="left:1586px;top:435px" width="16" height="16" viewBox="0 0 16 16" ><path d="M1 2q4 0 6 2M7.5 6q3 4 1.5 8l6-2" fill="none" stroke="#444" stroke-width="1.1"/><rect x="5.5" y="3.5" width="3.5" height="3.5" fill="#c0c0ff" stroke="#008000" stroke-width="1.2"/></svg>
<svg style="left:1586px;top:464px" width="16" height="16" viewBox="0 0 16 16" ><path d="M2 14L14 2" stroke="#d02020" stroke-width="1"/><path d="M1 12l3 0.5M3 10.5l0.5 3.5M12 2l0.5 3M10.5 4l3.5 0" stroke="#d02020" stroke-width="1"/><circle cx="8" cy="8" r="1.8" fill="#80c080" stroke="#008000" stroke-width="1.1"/></svg>
<svg style="left:1586px;top:490px" width="16" height="16" viewBox="0 0 16 16" ><path d="M2 14.5h12.5V3" fill="none" stroke="#888" stroke-width="1.2"/><circle cx="6" cy="9" r="1.5" fill="#c0c0ff" stroke="#008000" stroke-width="1.2"/></svg>
<svg style="left:1586px;top:518px" width="16" height="16" viewBox="0 0 16 16" ><path d="M2 6h6M5 3v6" stroke="#222" stroke-width="1.2"/><path d="M2 14.5h12.5V1" fill="none" stroke="#222" stroke-width="1" stroke-dasharray="1.6 1"/></svg>
<svg style="left:1586px;top:559px" width="16" height="16" viewBox="0 0 16 16" ><defs><linearGradient id="gpb" x1="0" y1="0" x2="1" y2="1"><stop offset="0" stop-color="#fff"/><stop offset="1" stop-color="#909090"/></linearGradient></defs><rect x="3.5" y="1.5" width="9" height="12" fill="url(#gpb)" stroke="#000" stroke-width="1.1"/></svg>
<svg style="left:1586px;top:588px" width="16" height="16" viewBox="0 0 16 16" ><path d="M1 3.5h14M1 7h14M1 10.5h14M1 14h14M3.5 1v15M7 1v15M10.5 1v15M14 1v15" stroke="#0000e0" stroke-width="1.3"/></svg>
<svg style="left:1586px;top:616px" width="16" height="16" viewBox="0 0 16 16" ><path d="M3 2v13M13 2v13M11 2L6 15" stroke="#0000e0" stroke-width="1.4"/></svg>
<svg style="left:1572px;top:594px" width="6" height="48" shape-rendering="crispEdges"><rect x="0" y="0" width="1" height="1" fill="#9a9a9a"/><rect x="1" y="1" width="1" height="1" fill="#fff"/><rect x="3" y="0" width="1" height="1" fill="#9a9a9a"/><rect x="4" y="1" width="1" height="1" fill="#fff"/><rect x="0" y="3" width="1" height="1" fill="#9a9a9a"/><rect x="1" y="4" width="1" height="1" fill="#fff"/><rect x="3" y="3" width="1" height="1" fill="#9a9a9a"/><rect x="4" y="4" width="1" height="1" fill="#fff"/><rect x="0" y="6" width="1" height="1" fill="#9a9a9a"/><rect x="1" y="7" width="1" height="1" fill="#fff"/><rect x="3" y="6" width="1" height="1" fill="#9a9a9a"/><rect x="4" y="7" width="1" height="1" fill="#fff"/><rect x="0" y="9" width="1" height="1" fill="#9a9a9a"/><rect x="1" y="10" width="1" height="1" fill="#fff"/><rect x="3" y="9" width="1" height="1" fill="#9a9a9a"/><rect x="4" y="10" width="1" height="1" fill="#fff"/><rect x="0" y="12" width="1" height="1" fill="#9a9a9a"/><rect x="1" y="13" width="1" height="1" fill="#fff"/><rect x="3" y="12" width="1" height="1" fill="#9a9a9a"/><rect x="4" y="13" width="1" height="1" fill="#fff"/><rect x="0" y="15" width="1" height="1" fill="#9a9a9a"/><rect x="1" y="16" width="1" height="1" fill="#fff"/><rect x="3" y="15" width="1" height="1" fill="#9a9a9a"/><rect x="4" y="16" width="1" height="1" fill="#fff"/><rect x="0" y="18" width="1" height="1" fill="#9a9a9a"/><rect x="1" y="19" width="1" height="1" fill="#fff"/><rect x="3" y="18" width="1" height="1" fill="#9a9a9a"/><rect x="4" y="19" width="1" height="1" fill="#fff"/><rect x="0" y="21" width="1" height="1" fill="#9a9a9a"/><rect x="1" y="22" width="1" height="1" fill="#fff"/><rect x="3" y="21" width="1" height="1" fill="#9a9a9a"/><rect x="4" y="22" width="1" height="1" fill="#fff"/><rect x="0" y="24" width="1" height="1" fill="#9a9a9a"/><rect x="1" y="25" width="1" height="1" fill="#fff"/><rect x="3" y="24" width="1" height="1" fill="#9a9a9a"/><rect x="4" y="25" width="1" height="1" fill="#fff"/><rect x="0" y="27" width="1" height="1" fill="#9a9a9a"/><rect x="1" y="28" width="1" height="1" fill="#fff"/><rect x="3" y="27" width="1" height="1" fill="#9a9a9a"/><rect x="4" y="28" width="1" height="1" fill="#fff"/><rect x="0" y="30" width="1" height="1" fill="#9a9a9a"/><rect x="1" y="31" width="1" height="1" fill="#fff"/><rect x="3" y="30" width="1" height="1" fill="#9a9a9a"/><rect x="4" y="31" width="1" height="1" fill="#fff"/><rect x="0" y="33" width="1" height="1" fill="#9a9a9a"/><rect x="1" y="34" width="1" height="1" fill="#fff"/><rect x="3" y="33" width="1" height="1" fill="#9a9a9a"/><rect x="4" y="34" width="1" height="1" fill="#fff"/><rect x="0" y="36" width="1" height="1" fill="#9a9a9a"/><rect x="1" y="37" width="1" height="1" fill="#fff"/><rect x="3" y="36" width="1" height="1" fill="#9a9a9a"/><rect x="4" y="37" width="1" height="1" fill="#fff"/><rect x="0" y="39" width="1" height="1" fill="#9a9a9a"/><rect x="1" y="40" width="1" height="1" fill="#fff"/><rect x="3" y="39" width="1" height="1" fill="#9a9a9a"/><rect x="4" y="40" width="1" height="1" fill="#fff"/><rect x="0" y="42" width="1" height="1" fill="#9a9a9a"/><rect x="1" y="43" width="1" height="1" fill="#fff"/><rect x="3" y="42" width="1" height="1" fill="#9a9a9a"/><rect x="4" y="43" width="1" height="1" fill="#fff"/><rect x="0" y="45" width="1" height="1" fill="#9a9a9a"/><rect x="1" y="46" width="1" height="1" fill="#fff"/><rect x="3" y="45" width="1" height="1" fill="#9a9a9a"/><rect x="4" y="46" width="1" height="1" fill="#fff"/></svg>
<svg style="left:188px;top:1163px" width="16" height="16" viewBox="0 0 16 16" ><path d="M0.8 9.5Q8 2 15.2 9.5 8 16 0.8 9.5z" fill="#fff" stroke="#111" stroke-width="1.4"/><circle cx="8.3" cy="9.3" r="3.7" fill="#111"/><circle cx="7.3" cy="8.2" r="1.1" fill="#fff"/><path d="M2.5 6.5L0.8 3.5M5.5 5L4.8 1.5M8.3 4.6V0.5M11 5l0.8-3.5M13.8 6.5l1.7-3" stroke="#111" stroke-width="1.3"/></svg>
<svg style="left:212px;top:1162px" width="16" height="18" viewBox="0 0 16 18" ><path d="M4 8v-3q0-4 4-4t3.5 3.5" fill="none" stroke="#111" stroke-width="1.4"/><path d="M1.5 9l11-2 1.5 8-11 2z" fill="#f0d040" stroke="#111" stroke-width="1"/><rect x="7" y="11" width="1.6" height="3" fill="#111"/></svg>
<div class="t" style="left:727.92px;top:6.60px;font-size:13px;color:#000;transform:scaleX(1.0798);transform-origin:0 0;">New document 1 – Inkscape</div>
<div class="t" style="left:10.21px;top:30.00px;font-size:13px;transform:scaleX(0.9900);transform-origin:0 0;">File</div>
<div class="t" style="left:45.11px;top:30.00px;font-size:13px;transform:scaleX(1.0857);transform-origin:0 0;">Edit</div>
<div class="t" style="left:83.70px;top:30.00px;font-size:13px;transform:scaleX(1.0429);transform-origin:0 0;">View</div>
<div class="t" style="left:125.80px;top:30.00px;font-size:13px;transform:scaleX(1.0969);transform-origin:0 0;">Layer</div>
<div class="t" style="left:174.92px;top:30.00px;font-size:13px;transform:scaleX(1.0811);transform-origin:0 0;">Object</div>
<div class="t" style="left:229.98px;top:30.00px;font-size:13px;transform:scaleX(1.1240);transform-origin:0 0;">Path</div>
<div class="t" style="left:273.90px;top:30.00px;font-size:13px;transform:scaleX(1.0542);transform-origin:0 0;">Text</div>
<div class="t" style="left:313.41px;top:30.00px;font-size:13px;transform:scaleX(1.0912);transform-origin:0 0;">Filters</div>
<div class="t" style="left:365.51px;top:30.00px;font-size:13px;transform:scaleX(1.0935);transform-origin:0 0;">Extensions</div>
<div class="t" style="left:448.07px;top:30.00px;font-size:13px;transform:scaleX(1.1280);transform-origin:0 0;">Help</div>
<div class="t" style="left:364.55px;top:91.27px;font-size:11.5px;color:#a4a4a4;transform:scaleX(1.2500);transform-origin:0 0;">X</div>
<div class="t" style="left:452.00px;top:91.27px;font-size:11.5px;color:#a4a4a4;">Y</div>
<div class="t" style="left:538.00px;top:91.27px;font-size:11.5px;color:#a4a4a4;transform:scaleX(0.8455);transform-origin:0 0;">W</div>
<div class="t" style="left:653.27px;top:91.27px;font-size:11.5px;color:#a4a4a4;transform:scaleX(1.0286);transform-origin:0 0;">H</div>
<div class="t" style="left:383.50px;top:91.27px;font-size:11.5px;color:#a4a4a4;transform:scaleX(1.0586);transform-origin:0 0;">0.000</div>
<div class="t" style="left:469.50px;top:91.27px;font-size:11.5px;color:#a4a4a4;transform:scaleX(1.0586);transform-origin:0 0;">0.000</div>
<div class="t" style="left:557.30px;top:91.27px;font-size:11.5px;color:#a4a4a4;transform:scaleX(1.0964);transform-origin:0 0;">0.001</div>
<div class="t" style="left:672.30px;top:91.27px;font-size:11.5px;color:#a4a4a4;transform:scaleX(1.0964);transform-origin:0 0;">0.001</div>
<div class="t" style="left:739.15px;top:91.27px;font-size:11.5px;transform:scaleX(1.1545);transform-origin:0 0;">px</div>
<div class="t" style="left:804.80px;top:90.84px;font-size:12px;transform:scaleX(1.0545);transform-origin:0 0;">Affect:</div>
<div class="t" style="left:4.70px;top:1158.91px;font-size:10.5px;transform:scaleX(1.1000);transform-origin:0 0;">Fill:</div>
<div class="t" style="left:4.56px;top:1171.71px;font-size:10.5px;transform:scaleX(1.2387);transform-origin:0 0;">Stroke:</div>
<div class="t" style="left:76.11px;top:1158.91px;font-size:10.5px;transform:scaleX(1.0941);transform-origin:0 0;">N/A</div>
<div class="t" style="left:76.11px;top:1171.71px;font-size:10.5px;transform:scaleX(1.0941);transform-origin:0 0;">N/A</div>
<div class="t" style="left:128.90px;top:1165.81px;font-size:10.5px;transform:scaleX(1.0700);transform-origin:0 0;">O:</div>
<div class="t" style="left:146.89px;top:1165.34px;font-size:12px;color:#a8a8a8;clip-path:inset(0 24% 0 0);transform:scaleX(1.1053);transform-origin:0 0;">100</div>
<div class="t" style="left:241.40px;top:1166.02px;font-size:12.5px;font-weight:bold;transform:scaleX(1.0667);transform-origin:0 0;">•Layer 1</div>
<div class="t" style="left:328.56px;top:1165.85px;font-size:12.7px;color:#1a1a1a;transform:scaleX(1.1439);transform-origin:0 0;">No objects selected. Click, Shift+click, or drag around objects to select.</div>
<div class="t" style="left:1447.00px;top:1159.11px;font-size:10.5px;transform:scaleX(1.0556);transform-origin:0 0;">X:</div>
<div class="t" style="left:1447.00px;top:1172.11px;font-size:10.5px;transform:scaleX(1.0556);transform-origin:0 0;">Y:</div>
<div class="t" style="left:1519.00px;top:1165.61px;font-size:10.5px;transform:scaleX(1.1778);transform-origin:0 0;">Z:</div>
<div class="t" style="left:1473.56px;top:1158.27px;font-size:11.5px;font-family:'Liberation Mono';transform:scaleX(1.0424);transform-origin:0 0;">14.29</div>
<div class="t" style="left:1459.49px;top:1171.27px;font-size:11.5px;font-family:'Liberation Mono';transform:scaleX(1.0106);transform-origin:0 0;">1485.71</div>
<div class="t" style="left:1543.53px;top:1165.19px;font-size:11px;transform:scaleX(1.0667);transform-origin:0 0;">35%</div>
<div style="left:11px;top:42px;width:7px;height:1px;background:#000"></div>
<div style="left:46px;top:42px;width:8px;height:1px;background:#000"></div>
<div style="left:84px;top:42px;width:9px;height:1px;background:#000"></div>
<div style="left:127px;top:42px;width:7px;height:1px;background:#000"></div>
<div style="left:176px;top:42px;width:10px;height:1px;background:#000"></div>
<div style="left:231px;top:42px;width:8px;height:1px;background:#000"></div>
<div style="left:274px;top:42px;width:6px;height:1px;background:#000"></div>
<div style="left:345px;top:42px;width:7px;height:1px;background:#000"></div>
<div style="left:394px;top:42px;width:8px;height:1px;background:#000"></div>
<div style="left:449px;top:42px;width:10px;height:1px;background:#000"></div></body></html>
